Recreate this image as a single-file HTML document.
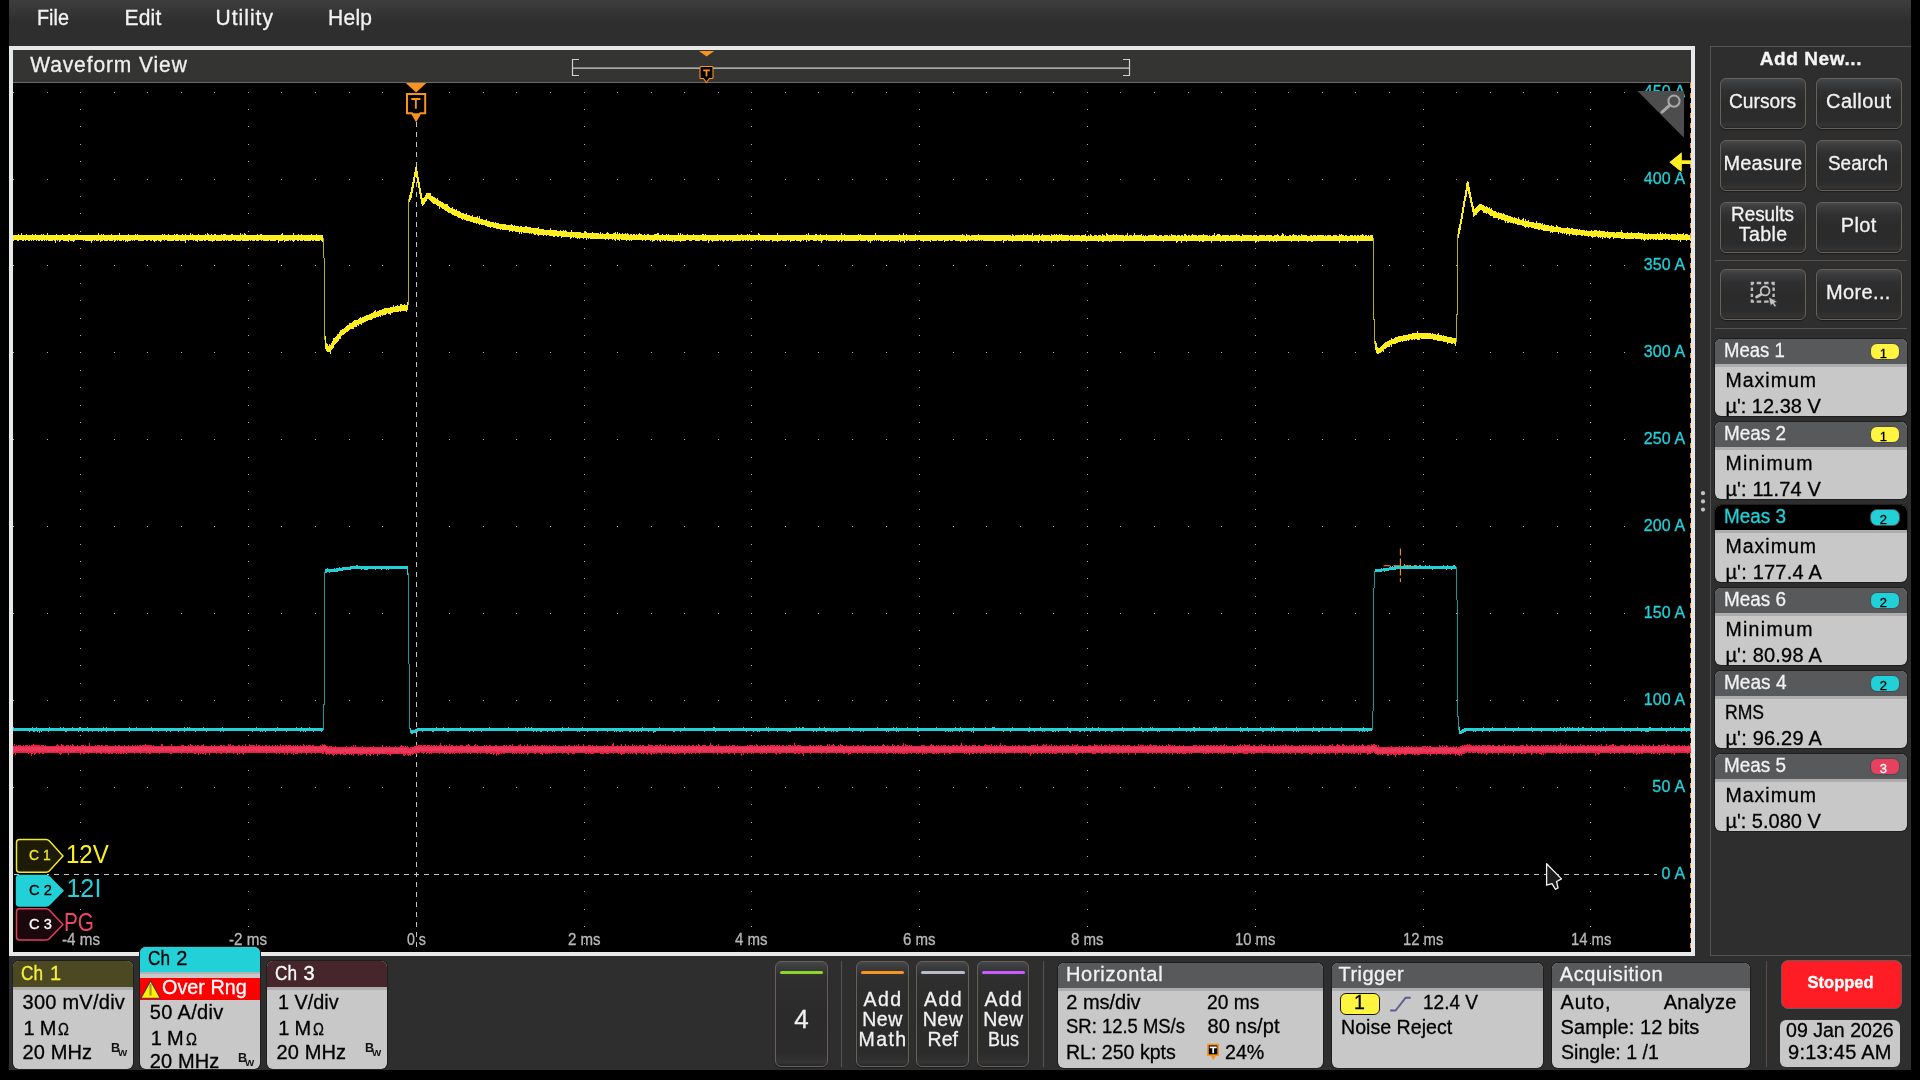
<!DOCTYPE html>
<html><head><meta charset="utf-8"><title>Oscilloscope</title>
<style>
html,body{margin:0;padding:0;background:#000;}
body{width:1920px;height:1080px;position:relative;overflow:hidden;font-family:"Liberation Sans",sans-serif;}
.t{position:absolute;line-height:1;white-space:pre;-webkit-text-stroke:0.3px;}
.a{position:absolute;box-sizing:border-box;}
.btn{position:absolute;box-sizing:border-box;border:1px solid #686059;border-radius:6px;box-shadow:0 1px 1px #1c1c1c;
 background:linear-gradient(#46484a 0%,#3c3d3e 8%,#303031 24%,#2b2b2c 50%,#2c2c2d 84%,#343435 95%,#262626 100%);}
.badge{position:absolute;box-sizing:border-box;border-radius:6px;background:#c8c8c8;overflow:hidden;box-shadow:0 0 0 1px #1e1e1e;}
.badge .h{position:absolute;left:0;top:0;right:0;}
svg{position:absolute;overflow:visible;}
</style></head><body><div id="root" style="position:absolute;left:0;top:0;width:1920px;height:1080px;will-change:transform">

<div class="a" style="left:9px;top:0;width:1902px;height:1070px;background:#2e2e2e"></div>
<div class="a" style="left:9px;top:0;width:1902px;height:46px;background:linear-gradient(#3e3e3e 0%,#383838 18%,#303030 42%,#2e2e2e 56%,#2e2e2e 100%)"></div>
<span class="t" style="left:36.70px;top:6px;line-height:23px;font-size:21px;color:#f2f2f2;transform:scale(0.9435,1.060);transform-origin:0 19px;">File</span>
<span class="t" style="left:124.40px;top:6px;line-height:23px;font-size:21px;color:#f2f2f2;letter-spacing:0.258px;transform:scale(1.0000,1.060);transform-origin:0 19px;">Edit</span>
<span class="t" style="left:215.60px;top:6px;line-height:23px;font-size:21px;color:#f2f2f2;letter-spacing:0.992px;transform:scale(1.0000,1.060);transform-origin:0 19px;">Utility</span>
<span class="t" style="left:328.00px;top:6px;line-height:23px;font-size:21px;color:#f2f2f2;letter-spacing:0.282px;transform:scale(1.0000,1.060);transform-origin:0 19px;">Help</span>
<div class="a" style="left:9px;top:46px;width:1686px;height:910px;background:#e7e8ea"></div>
<div class="a" style="left:13px;top:50px;width:1678px;height:33px;background:#343433;border-bottom:1px solid #6a6a6a"></div>
<span class="t" style="left:30.20px;top:53px;line-height:23px;font-size:21px;color:#f0f0f0;letter-spacing:0.896px;transform:scale(1.0000,1.040);transform-origin:0 19px;">Waveform View</span>
<div class="a" style="left:13px;top:83px;width:1678px;height:869px;background:#000;overflow:hidden"></div>
<svg style="left:0;top:0" width="1920" height="1080" viewBox="0 0 1920 1080">
<defs><clipPath id="pc"><rect x="13" y="83" width="1678" height="869"/></clipPath></defs>
<g clip-path="url(#pc)">
<path d="M13 787.5h1M47 787.5h1M80 787.5h1M114 787.5h1M147 787.5h1M181 787.5h1M214 787.5h1M248 787.5h1M281 787.5h1M315 787.5h1M349 787.5h1M382 787.5h1M449 787.5h1M483 787.5h1M516 787.5h1M550 787.5h1M584 787.5h1M617 787.5h1M651 787.5h1M684 787.5h1M718 787.5h1M751 787.5h1M785 787.5h1M818 787.5h1M852 787.5h1M886 787.5h1M919 787.5h1M953 787.5h1M986 787.5h1M1020 787.5h1M1053 787.5h1M1087 787.5h1M1120 787.5h1M1154 787.5h1M1188 787.5h1M1221 787.5h1M1255 787.5h1M1288 787.5h1M1322 787.5h1M1355 787.5h1M1389 787.5h1M1423 787.5h1M1456 787.5h1M1490 787.5h1M1523 787.5h1M1557 787.5h1M1590 787.5h1M1624 787.5h1M1657 787.5h1M13 700.5h1M47 700.5h1M80 700.5h1M114 700.5h1M147 700.5h1M181 700.5h1M214 700.5h1M248 700.5h1M281 700.5h1M315 700.5h1M349 700.5h1M382 700.5h1M449 700.5h1M483 700.5h1M516 700.5h1M550 700.5h1M584 700.5h1M617 700.5h1M651 700.5h1M684 700.5h1M718 700.5h1M751 700.5h1M785 700.5h1M818 700.5h1M852 700.5h1M886 700.5h1M919 700.5h1M953 700.5h1M986 700.5h1M1020 700.5h1M1053 700.5h1M1087 700.5h1M1120 700.5h1M1154 700.5h1M1188 700.5h1M1221 700.5h1M1255 700.5h1M1288 700.5h1M1322 700.5h1M1355 700.5h1M1389 700.5h1M1423 700.5h1M1456 700.5h1M1490 700.5h1M1523 700.5h1M1557 700.5h1M1590 700.5h1M1624 700.5h1M1657 700.5h1M13 613.5h1M47 613.5h1M80 613.5h1M114 613.5h1M147 613.5h1M181 613.5h1M214 613.5h1M248 613.5h1M281 613.5h1M315 613.5h1M349 613.5h1M382 613.5h1M449 613.5h1M483 613.5h1M516 613.5h1M550 613.5h1M584 613.5h1M617 613.5h1M651 613.5h1M684 613.5h1M718 613.5h1M751 613.5h1M785 613.5h1M818 613.5h1M852 613.5h1M886 613.5h1M919 613.5h1M953 613.5h1M986 613.5h1M1020 613.5h1M1053 613.5h1M1087 613.5h1M1120 613.5h1M1154 613.5h1M1188 613.5h1M1221 613.5h1M1255 613.5h1M1288 613.5h1M1322 613.5h1M1355 613.5h1M1389 613.5h1M1423 613.5h1M1456 613.5h1M1490 613.5h1M1523 613.5h1M1557 613.5h1M1590 613.5h1M1624 613.5h1M1657 613.5h1M13 526.5h1M47 526.5h1M80 526.5h1M114 526.5h1M147 526.5h1M181 526.5h1M214 526.5h1M248 526.5h1M281 526.5h1M315 526.5h1M349 526.5h1M382 526.5h1M449 526.5h1M483 526.5h1M516 526.5h1M550 526.5h1M584 526.5h1M617 526.5h1M651 526.5h1M684 526.5h1M718 526.5h1M751 526.5h1M785 526.5h1M818 526.5h1M852 526.5h1M886 526.5h1M919 526.5h1M953 526.5h1M986 526.5h1M1020 526.5h1M1053 526.5h1M1087 526.5h1M1120 526.5h1M1154 526.5h1M1188 526.5h1M1221 526.5h1M1255 526.5h1M1288 526.5h1M1322 526.5h1M1355 526.5h1M1389 526.5h1M1423 526.5h1M1456 526.5h1M1490 526.5h1M1523 526.5h1M1557 526.5h1M1590 526.5h1M1624 526.5h1M1657 526.5h1M13 439.5h1M47 439.5h1M80 439.5h1M114 439.5h1M147 439.5h1M181 439.5h1M214 439.5h1M248 439.5h1M281 439.5h1M315 439.5h1M349 439.5h1M382 439.5h1M449 439.5h1M483 439.5h1M516 439.5h1M550 439.5h1M584 439.5h1M617 439.5h1M651 439.5h1M684 439.5h1M718 439.5h1M751 439.5h1M785 439.5h1M818 439.5h1M852 439.5h1M886 439.5h1M919 439.5h1M953 439.5h1M986 439.5h1M1020 439.5h1M1053 439.5h1M1087 439.5h1M1120 439.5h1M1154 439.5h1M1188 439.5h1M1221 439.5h1M1255 439.5h1M1288 439.5h1M1322 439.5h1M1355 439.5h1M1389 439.5h1M1423 439.5h1M1456 439.5h1M1490 439.5h1M1523 439.5h1M1557 439.5h1M1590 439.5h1M1624 439.5h1M1657 439.5h1M13 352.5h1M47 352.5h1M80 352.5h1M114 352.5h1M147 352.5h1M181 352.5h1M214 352.5h1M248 352.5h1M281 352.5h1M315 352.5h1M349 352.5h1M382 352.5h1M449 352.5h1M483 352.5h1M516 352.5h1M550 352.5h1M584 352.5h1M617 352.5h1M651 352.5h1M684 352.5h1M718 352.5h1M751 352.5h1M785 352.5h1M818 352.5h1M852 352.5h1M886 352.5h1M919 352.5h1M953 352.5h1M986 352.5h1M1020 352.5h1M1053 352.5h1M1087 352.5h1M1120 352.5h1M1154 352.5h1M1188 352.5h1M1221 352.5h1M1255 352.5h1M1288 352.5h1M1322 352.5h1M1355 352.5h1M1389 352.5h1M1423 352.5h1M1456 352.5h1M1490 352.5h1M1523 352.5h1M1557 352.5h1M1590 352.5h1M1624 352.5h1M1657 352.5h1M13 265.5h1M47 265.5h1M80 265.5h1M114 265.5h1M147 265.5h1M181 265.5h1M214 265.5h1M248 265.5h1M281 265.5h1M315 265.5h1M349 265.5h1M382 265.5h1M449 265.5h1M483 265.5h1M516 265.5h1M550 265.5h1M584 265.5h1M617 265.5h1M651 265.5h1M684 265.5h1M718 265.5h1M751 265.5h1M785 265.5h1M818 265.5h1M852 265.5h1M886 265.5h1M919 265.5h1M953 265.5h1M986 265.5h1M1020 265.5h1M1053 265.5h1M1087 265.5h1M1120 265.5h1M1154 265.5h1M1188 265.5h1M1221 265.5h1M1255 265.5h1M1288 265.5h1M1322 265.5h1M1355 265.5h1M1389 265.5h1M1423 265.5h1M1456 265.5h1M1490 265.5h1M1523 265.5h1M1557 265.5h1M1590 265.5h1M1624 265.5h1M1657 265.5h1M13 179.5h1M47 179.5h1M80 179.5h1M114 179.5h1M147 179.5h1M181 179.5h1M214 179.5h1M248 179.5h1M281 179.5h1M315 179.5h1M349 179.5h1M382 179.5h1M449 179.5h1M483 179.5h1M516 179.5h1M550 179.5h1M584 179.5h1M617 179.5h1M651 179.5h1M684 179.5h1M718 179.5h1M751 179.5h1M785 179.5h1M818 179.5h1M852 179.5h1M886 179.5h1M919 179.5h1M953 179.5h1M986 179.5h1M1020 179.5h1M1053 179.5h1M1087 179.5h1M1120 179.5h1M1154 179.5h1M1188 179.5h1M1221 179.5h1M1255 179.5h1M1288 179.5h1M1322 179.5h1M1355 179.5h1M1389 179.5h1M1423 179.5h1M1456 179.5h1M1490 179.5h1M1523 179.5h1M1557 179.5h1M1590 179.5h1M1624 179.5h1M1657 179.5h1M13 92.5h1M47 92.5h1M80 92.5h1M114 92.5h1M147 92.5h1M181 92.5h1M214 92.5h1M248 92.5h1M281 92.5h1M315 92.5h1M349 92.5h1M382 92.5h1M449 92.5h1M483 92.5h1M516 92.5h1M550 92.5h1M584 92.5h1M617 92.5h1M651 92.5h1M684 92.5h1M718 92.5h1M751 92.5h1M785 92.5h1M818 92.5h1M852 92.5h1M886 92.5h1M919 92.5h1M953 92.5h1M986 92.5h1M1020 92.5h1M1053 92.5h1M1087 92.5h1M1120 92.5h1M1154 92.5h1M1188 92.5h1M1221 92.5h1M1255 92.5h1M1288 92.5h1M1322 92.5h1M1355 92.5h1M1389 92.5h1M1423 92.5h1M1456 92.5h1M1490 92.5h1M1523 92.5h1M1557 92.5h1M1590 92.5h1M1624 92.5h1M1657 92.5h1M80 943.5h1M80 926.5h1M80 909.5h1M80 891.5h1M80 856.5h1M80 839.5h1M80 822.5h1M80 804.5h1M80 770.5h1M80 752.5h1M80 735.5h1M80 717.5h1M80 683.5h1M80 665.5h1M80 648.5h1M80 630.5h1M80 596.5h1M80 578.5h1M80 561.5h1M80 544.5h1M80 509.5h1M80 491.5h1M80 474.5h1M80 457.5h1M80 422.5h1M80 405.5h1M80 387.5h1M80 370.5h1M80 335.5h1M80 318.5h1M80 300.5h1M80 283.5h1M80 248.5h1M80 231.5h1M80 213.5h1M80 196.5h1M80 161.5h1M80 144.5h1M80 126.5h1M80 109.5h1M248 943.5h1M248 926.5h1M248 909.5h1M248 891.5h1M248 856.5h1M248 839.5h1M248 822.5h1M248 804.5h1M248 770.5h1M248 752.5h1M248 735.5h1M248 717.5h1M248 683.5h1M248 665.5h1M248 648.5h1M248 630.5h1M248 596.5h1M248 578.5h1M248 561.5h1M248 544.5h1M248 509.5h1M248 491.5h1M248 474.5h1M248 457.5h1M248 422.5h1M248 405.5h1M248 387.5h1M248 370.5h1M248 335.5h1M248 318.5h1M248 300.5h1M248 283.5h1M248 248.5h1M248 231.5h1M248 213.5h1M248 196.5h1M248 161.5h1M248 144.5h1M248 126.5h1M248 109.5h1M584 943.5h1M584 926.5h1M584 909.5h1M584 891.5h1M584 856.5h1M584 839.5h1M584 822.5h1M584 804.5h1M584 770.5h1M584 752.5h1M584 735.5h1M584 717.5h1M584 683.5h1M584 665.5h1M584 648.5h1M584 630.5h1M584 596.5h1M584 578.5h1M584 561.5h1M584 544.5h1M584 509.5h1M584 491.5h1M584 474.5h1M584 457.5h1M584 422.5h1M584 405.5h1M584 387.5h1M584 370.5h1M584 335.5h1M584 318.5h1M584 300.5h1M584 283.5h1M584 248.5h1M584 231.5h1M584 213.5h1M584 196.5h1M584 161.5h1M584 144.5h1M584 126.5h1M584 109.5h1M751 943.5h1M751 926.5h1M751 909.5h1M751 891.5h1M751 856.5h1M751 839.5h1M751 822.5h1M751 804.5h1M751 770.5h1M751 752.5h1M751 735.5h1M751 717.5h1M751 683.5h1M751 665.5h1M751 648.5h1M751 630.5h1M751 596.5h1M751 578.5h1M751 561.5h1M751 544.5h1M751 509.5h1M751 491.5h1M751 474.5h1M751 457.5h1M751 422.5h1M751 405.5h1M751 387.5h1M751 370.5h1M751 335.5h1M751 318.5h1M751 300.5h1M751 283.5h1M751 248.5h1M751 231.5h1M751 213.5h1M751 196.5h1M751 161.5h1M751 144.5h1M751 126.5h1M751 109.5h1M919 943.5h1M919 926.5h1M919 909.5h1M919 891.5h1M919 856.5h1M919 839.5h1M919 822.5h1M919 804.5h1M919 770.5h1M919 752.5h1M919 735.5h1M919 717.5h1M919 683.5h1M919 665.5h1M919 648.5h1M919 630.5h1M919 596.5h1M919 578.5h1M919 561.5h1M919 544.5h1M919 509.5h1M919 491.5h1M919 474.5h1M919 457.5h1M919 422.5h1M919 405.5h1M919 387.5h1M919 370.5h1M919 335.5h1M919 318.5h1M919 300.5h1M919 283.5h1M919 248.5h1M919 231.5h1M919 213.5h1M919 196.5h1M919 161.5h1M919 144.5h1M919 126.5h1M919 109.5h1M1087 943.5h1M1087 926.5h1M1087 909.5h1M1087 891.5h1M1087 856.5h1M1087 839.5h1M1087 822.5h1M1087 804.5h1M1087 770.5h1M1087 752.5h1M1087 735.5h1M1087 717.5h1M1087 683.5h1M1087 665.5h1M1087 648.5h1M1087 630.5h1M1087 596.5h1M1087 578.5h1M1087 561.5h1M1087 544.5h1M1087 509.5h1M1087 491.5h1M1087 474.5h1M1087 457.5h1M1087 422.5h1M1087 405.5h1M1087 387.5h1M1087 370.5h1M1087 335.5h1M1087 318.5h1M1087 300.5h1M1087 283.5h1M1087 248.5h1M1087 231.5h1M1087 213.5h1M1087 196.5h1M1087 161.5h1M1087 144.5h1M1087 126.5h1M1087 109.5h1M1255 943.5h1M1255 926.5h1M1255 909.5h1M1255 891.5h1M1255 856.5h1M1255 839.5h1M1255 822.5h1M1255 804.5h1M1255 770.5h1M1255 752.5h1M1255 735.5h1M1255 717.5h1M1255 683.5h1M1255 665.5h1M1255 648.5h1M1255 630.5h1M1255 596.5h1M1255 578.5h1M1255 561.5h1M1255 544.5h1M1255 509.5h1M1255 491.5h1M1255 474.5h1M1255 457.5h1M1255 422.5h1M1255 405.5h1M1255 387.5h1M1255 370.5h1M1255 335.5h1M1255 318.5h1M1255 300.5h1M1255 283.5h1M1255 248.5h1M1255 231.5h1M1255 213.5h1M1255 196.5h1M1255 161.5h1M1255 144.5h1M1255 126.5h1M1255 109.5h1M1423 943.5h1M1423 926.5h1M1423 909.5h1M1423 891.5h1M1423 856.5h1M1423 839.5h1M1423 822.5h1M1423 804.5h1M1423 770.5h1M1423 752.5h1M1423 735.5h1M1423 717.5h1M1423 683.5h1M1423 665.5h1M1423 648.5h1M1423 630.5h1M1423 596.5h1M1423 578.5h1M1423 561.5h1M1423 544.5h1M1423 509.5h1M1423 491.5h1M1423 474.5h1M1423 457.5h1M1423 422.5h1M1423 405.5h1M1423 387.5h1M1423 370.5h1M1423 335.5h1M1423 318.5h1M1423 300.5h1M1423 283.5h1M1423 248.5h1M1423 231.5h1M1423 213.5h1M1423 196.5h1M1423 161.5h1M1423 144.5h1M1423 126.5h1M1423 109.5h1M1590 943.5h1M1590 926.5h1M1590 909.5h1M1590 891.5h1M1590 856.5h1M1590 839.5h1M1590 822.5h1M1590 804.5h1M1590 770.5h1M1590 752.5h1M1590 735.5h1M1590 717.5h1M1590 683.5h1M1590 665.5h1M1590 648.5h1M1590 630.5h1M1590 596.5h1M1590 578.5h1M1590 561.5h1M1590 544.5h1M1590 509.5h1M1590 491.5h1M1590 474.5h1M1590 457.5h1M1590 422.5h1M1590 405.5h1M1590 387.5h1M1590 370.5h1M1590 335.5h1M1590 318.5h1M1590 300.5h1M1590 283.5h1M1590 248.5h1M1590 231.5h1M1590 213.5h1M1590 196.5h1M1590 161.5h1M1590 144.5h1M1590 126.5h1M1590 109.5h1" stroke="#b4b4b4" stroke-width="1" fill="none" shape-rendering="crispEdges"/>
<line x1="14" y1="874.5" x2="1691" y2="874.5" stroke="#c4c4c4" stroke-width="1" stroke-dasharray="5 5" shape-rendering="crispEdges"/>
<line x1="416.5" y1="122" x2="416.5" y2="952" stroke="#c0c0c0" stroke-width="1" stroke-dasharray="5 5" shape-rendering="crispEdges"/>
<path d="M13 746h1V744h1V746h1V745h1V746h1V745h1h1h1V746h1h1V745h1V746h1V745h1h1h1V746h1V745h1V746h1V745h1h1V744h1V745h1h1h1h1h1h1V746h1V745h1h1h1V746h1V745h1V746h1h1h1h1h1h1h1h1h1h1V745h1V744h1V745h1V746h1h1V744h1V745h1h1V746h1h1V745h1h1h1V746h1V745h1V746h1V744h1V745h1V746h1h1h1V745h1V746h1h1h1V745h1h1h1V746h1V745h1V746h1h1h1V743h1V746h1h1h1h1h1V745h1V746h1V745h1h1h1V746h1V745h1h1V746h1h1V745h1h1h1V746h1h1h1h1h1h1h1V745h1V746h1h1V745h1h1V746h1h1h1h1V745h1V746h1h1h1V745h1V746h1h1h1V745h1V746h1h1V745h1V746h1V745h1V746h1V745h1h1V746h1V745h1h1h1V744h1V745h1h1h1h1h1h1V746h1V745h1V746h1h1h1h1h1h1h1V744h1h1V746h1h1h1h1h1h1h1h1V744h1V746h1h1h1h1h1h1h1h1h1V745h1h1h1V746h1h1h1h1V745h1V746h1V744h1V745h1h1V746h1h1V745h1V746h1V745h1h1V746h1h1V745h1h1V744h1V746h1h1h1h1h1h1h1V745h1V746h1h1V745h1V746h1h1h1h1h1V745h1h1V746h1V745h1h1V746h1h1h1V744h1V745h1V744h1V746h1V745h1h1V746h1h1h1h1V745h1h1V746h1h1V745h1V746h1h1V744h1V746h1h1h1V744h1V745h1h1h1h1h1V746h1V744h1V746h1V745h1h1V746h1h1V745h1V746h1h1V745h1h1V746h1h1V745h1V746h1h1V745h1V746h1h1V745h1V746h1V745h1V746h1h1V744h1V746h1V745h1h1V746h1V745h1h1V746h1V745h1h1h1V746h1h1V745h1V746h1V745h1V746h1V745h1V746h1h1V745h1V746h1h1V744h1V745h1V746h1V745h1V746h1V745h1h1h1V746h1V745h1h1V746h1h1h1h1h1h1V745h1V746h1V744h1V745h1V744h1V745h1V746h1h1V747h1V746h1h1h1V747h1h1h1V746h1V747h1h1h1h1h1h1h1h1h1h1V746h1V747h1h1h1h1V746h1V747h1V745h1V747h1V745h1V747h1h1h1h1h1h1V746h1V747h1h1h1h1h1h1h1h1h1h1V746h1V747h1h1h1h1h1h1h1h1V745h1V747h1h1h1V746h1V747h1h1V746h1V747h1h1h1h1h1V746h1V747h1h1h1h1V746h1V745h1V746h1h1V747h1V746h1V747h1V746h1V747h1V748h1V747h1h1h1h1V746h1h1V745h1V746h1V745h1h1h1h1V746h1V745h1h1h1V746h1V745h1h1h1V746h1V745h1V746h1V745h1h1V746h1V745h1V746h1h1V745h1V743h1V745h1V746h1h1V745h1V746h1V745h1V746h1h1V744h1V746h1V745h1h1V746h1h1h1V745h1V746h1h1h1V745h1h1h1V746h1h1h1V745h1h1V744h1V745h1V746h1h1h1h1V745h1V744h1V746h1V745h1V746h1h1h1h1h1h1V745h1V746h1V745h1V746h1h1V745h1h1V746h1h1h1h1V745h1h1V746h1h1h1h1h1h1V745h1h1V746h1V745h1V746h1h1V745h1h1V746h1V744h1V746h1h1h1h1h1V745h1h1V744h1V746h1h1h1V745h1V746h1h1V744h1V746h1h1h1h1V745h1V746h1V745h1h1V746h1V745h1V746h1h1h1V745h1h1V746h1V745h1V746h1V745h1V746h1h1V745h1V746h1h1h1V745h1V746h1V745h1V746h1h1h1h1h1h1h1h1h1V745h1V746h1h1V745h1h1V746h1h1h1h1V745h1V746h1V745h1V746h1V744h1V746h1h1h1h1V744h1V746h1h1h1h1V745h1h1h1V746h1V745h1V746h1h1h1V745h1V746h1h1h1h1h1h1h1V745h1V746h1h1V745h1V746h1h1h1h1V744h1V743h1V746h1h1h1V745h1V746h1h1h1V744h1V746h1h1h1V744h1V746h1h1V745h1V746h1h1h1V744h1V746h1V745h1V746h1V745h1V746h1h1V745h1h1V746h1V745h1h1V746h1h1h1h1V744h1V745h1h1h1h1V746h1h1V745h1h1h1V746h1V745h1V744h1V746h1V745h1h1V746h1V744h1V746h1h1V745h1V746h1h1V745h1V746h1V745h1h1V746h1h1V745h1V746h1V745h1V746h1V745h1h1V746h1h1V745h1V746h1h1V745h1h1V746h1h1V745h1h1V746h1h1V745h1V746h1V744h1V745h1V746h1h1V745h1h1h1h1V746h1h1h1V745h1V743h1V745h1h1V746h1h1h1V745h1V746h1V744h1V746h1h1h1h1h1h1h1V745h1V746h1h1V745h1V746h1h1V745h1h1h1V746h1h1V745h1V746h1h1h1h1h1h1h1h1h1V745h1V746h1V745h1h1h1h1V746h1V745h1V746h1V744h1V745h1V746h1h1h1V745h1V746h1V745h1h1V746h1h1V745h1h1V746h1V745h1h1h1h1h1V746h1V745h1h1V746h1V745h1V746h1h1V745h1h1V746h1h1V745h1V746h1V745h1h1h1V746h1V745h1V746h1V743h1V745h1V746h1V745h1h1h1h1V746h1h1h1h1h1h1h1h1V745h1h1V746h1h1V745h1V746h1h1V745h1V746h1V745h1V746h1V745h1h1V746h1h1h1h1h1V744h1V746h1V744h1V746h1V745h1h1V744h1V745h1V746h1h1h1V745h1V746h1V744h1V745h1h1V746h1h1h1V745h1V746h1h1h1h1h1h1V745h1V746h1h1h1V745h1h1V746h1h1h1V745h1h1V746h1V745h1V746h1h1h1h1V745h1V746h1h1h1V745h1V746h1h1V745h1V746h1h1h1h1V745h1V744h1V745h1V746h1h1V745h1V746h1h1h1h1V744h1V746h1V745h1V746h1h1V745h1h1V746h1h1h1V745h1V743h1V746h1V744h1V745h1h1V746h1V745h1V746h1V745h1V746h1h1h1h1h1h1h1h1h1V745h1h1h1h1V746h1h1h1h1h1V745h1V744h1V745h1h1V746h1h1V745h1V746h1V745h1V746h1h1V745h1V746h1V745h1h1h1V746h1h1V745h1V746h1h1h1V745h1h1h1V746h1V745h1h1V746h1h1V745h1V743h1V745h1V746h1h1V745h1h1V746h1h1V745h1V746h1h1V745h1h1h1h1V746h1h1V745h1h1V746h1h1h1h1V745h1V744h1V745h1h1h1h1V746h1V744h1V746h1h1V745h1V746h1V745h1V746h1h1V745h1V743h1V746h1V745h1V746h1V745h1h1V746h1h1h1h1h1h1V745h1V746h1h1V745h1V746h1h1V745h1h1V746h1h1h1V745h1V746h1V745h1V746h1h1h1h1h1V745h1h1h1h1h1V746h1V744h1V746h1h1h1h1V745h1V744h1V745h1h1V744h1V746h1h1V745h1V746h1V744h1V746h1h1V745h1V746h1V745h1V746h1h1h1V745h1V746h1V745h1V746h1V745h1V746h1V745h1h1h1V746h1h1h1V744h1V746h1V745h1h1h1V744h1V746h1h1h1h1V745h1V746h1h1h1h1h1V745h1h1h1V746h1h1h1V744h1V745h1h1h1V746h1V745h1V746h1V744h1V746h1h1V745h1h1h1V746h1h1V744h1V746h1V745h1h1h1h1V746h1V745h1h1h1h1V746h1h1V745h1h1V746h1V745h1V746h1V745h1h1h1V746h1h1h1h1V745h1V746h1h1h1V744h1V746h1V745h1h1h1h1V746h1V745h1V746h1V745h1V746h1V745h1V744h1V745h1V746h1V745h1h1h1h1V746h1h1V745h1V746h1h1V745h1V746h1h1h1V745h1V746h1V744h1V745h1h1V746h1V745h1V746h1V745h1V746h1h1h1h1V745h1V746h1h1h1V745h1V746h1h1h1h1h1h1h1h1h1V745h1h1h1h1V746h1h1V745h1V746h1V745h1V746h1V745h1V746h1h1V745h1h1h1V746h1V745h1h1V746h1V745h1h1V746h1V745h1h1V746h1h1V745h1h1V746h1V745h1V744h1V746h1V745h1V746h1h1h1h1h1V745h1V746h1h1h1h1V745h1V746h1V745h1V744h1V746h1V745h1V746h1V744h1V745h1h1h1h1V744h1V746h1h1h1V745h1h1V746h1h1h1h1V745h1V746h1V744h1V746h1V745h1h1h1V746h1h1h1V744h1V746h1h1h1V744h1V746h1h1h1V745h1V746h1h1V745h1V746h1V745h1h1V746h1V744h1V745h1V746h1V745h1V746h1h1V745h1h1V746h1h1h1h1h1h1V745h1V746h1h1V745h1h1V746h1V745h1h1V746h1V745h1V746h1V745h1V746h1h1V745h1V746h1V745h1V746h1V745h1V746h1h1V744h1V746h1h1V745h1V746h1h1h1h1h1V745h1h1V746h1V744h1V746h1h1h1V745h1V744h1V745h1h1V746h1h1V744h1h1V745h1V746h1V745h1V746h1h1V745h1V746h1V745h1h1V744h1V746h1h1V745h1V746h1h1V745h1V746h1V745h1V744h1V745h1V746h1h1h1V745h1h1h1V746h1V744h1V745h1V744h1h1V745h1h1V747h1V745h1V747h1h1h1h1h1h1h1h1h1h1h1h1V746h1V747h1h1h1h1h1h1h1V746h1V747h1h1V746h1V747h1h1h1V746h1V747h1V746h1V747h1h1V746h1V747h1h1h1h1V746h1V747h1h1h1h1h1V746h1h1h1h1V747h1V746h1V747h1V746h1h1V747h1h1h1h1h1h1h1h1V745h1V746h1V747h1V745h1V747h1V746h1V747h1V745h1V746h1V747h1h1h1h1h1V746h1V747h1h1V746h1V748h1V747h1h1V746h1h1V745h1V746h1V745h1h1h1V744h1V745h1V744h1V745h1h1V746h1V745h1V746h1V745h1h1V746h1V745h1h1V746h1h1V745h1h1h1h1V746h1V745h1h1h1h1V746h1V745h1h1V746h1h1h1h1V745h1h1V746h1h1V745h1V746h1V744h1V746h1h1h1V745h1V746h1V745h1V746h1h1V745h1h1V746h1h1h1h1h1V745h1h1h1h1V746h1h1V744h1V745h1V746h1h1h1V745h1h1V746h1V745h1V746h1h1V745h1h1V746h1h1V745h1V746h1V745h1V746h1V745h1h1h1h1V746h1V745h1h1V746h1V745h1h1h1V746h1h1V745h1h1V743h1V746h1V745h1h1V746h1V745h1V744h1V746h1V745h1V746h1V745h1V746h1h1h1V745h1V746h1h1V745h1V746h1h1V744h1V746h1V745h1h1h1V746h1h1V745h1h1V746h1V745h1h1V746h1V745h1V746h1V745h1V746h1h1V745h1h1V746h1V744h1V746h1h1h1h1V744h1V746h1h1V745h1h1h1V744h1h1V746h1V745h1V746h1h1h1h1V745h1h1h1h1V746h1V745h1V746h1h1V745h1V744h1V746h1V745h1V746h1V745h1h1V746h1V745h1h1V746h1V745h1V746h1h1V744h1V745h1V746h1V745h1V746h1h1h1V745h1V746h1h1h1V744h1V746h1h1h1h1V745h1h1V746h1V745h1h1h1V744h1V746h1h1V744h1V745h1h1V746h1h1h1V745h1h1V746h1h1h1V745h1h1V746h1h1V745h1V746h1V745h1V746h1h1h1V745h1V746h1h1h1V753h-1V754h-1V753h-1V753h-1V754h-1V753h-1V753h-1V753h-1V753h-1V753h-1V753h-1V753h-1V753h-1V753h-1V753h-1V753h-1V753h-1V755h-1V754h-1V753h-1V754h-1V753h-1V753h-1V753h-1V753h-1V753h-1V753h-1V753h-1V754h-1V753h-1V753h-1V753h-1V755h-1V753h-1V754h-1V753h-1V753h-1V754h-1V754h-1V753h-1V754h-1V753h-1V753h-1V753h-1V753h-1V753h-1V753h-1V753h-1V753h-1V754h-1V754h-1V753h-1V754h-1V753h-1V754h-1V755h-1V753h-1V753h-1V754h-1V753h-1V753h-1V753h-1V753h-1V753h-1V753h-1V753h-1V753h-1V754h-1V753h-1V753h-1V753h-1V753h-1V754h-1V753h-1V753h-1V753h-1V753h-1V754h-1V753h-1V753h-1V753h-1V754h-1V753h-1V753h-1V753h-1V753h-1V753h-1V753h-1V753h-1V753h-1V753h-1V753h-1V754h-1V755h-1V754h-1V753h-1V756h-1V753h-1V753h-1V753h-1V753h-1V753h-1V753h-1V753h-1V753h-1V754h-1V753h-1V753h-1V753h-1V753h-1V753h-1V753h-1V753h-1V753h-1V754h-1V753h-1V753h-1V753h-1V753h-1V753h-1V754h-1V753h-1V753h-1V753h-1V754h-1V753h-1V753h-1V753h-1V753h-1V754h-1V753h-1V754h-1V754h-1V753h-1V753h-1V754h-1V753h-1V753h-1V753h-1V753h-1V753h-1V753h-1V753h-1V753h-1V753h-1V753h-1V754h-1V753h-1V755h-1V753h-1V755h-1V754h-1V754h-1V753h-1V753h-1V754h-1V753h-1V753h-1V753h-1V754h-1V755h-1V753h-1V753h-1V753h-1V753h-1V753h-1V754h-1V754h-1V753h-1V754h-1V754h-1V753h-1V753h-1V754h-1V753h-1V753h-1V753h-1V754h-1V756h-1V753h-1V753h-1V753h-1V754h-1V753h-1V753h-1V753h-1V753h-1V754h-1V753h-1V753h-1V753h-1V753h-1V753h-1V755h-1V753h-1V753h-1V753h-1V753h-1V753h-1V754h-1V753h-1V753h-1V753h-1V753h-1V754h-1V755h-1V753h-1V754h-1V753h-1V753h-1V754h-1V753h-1V753h-1V754h-1V753h-1V752h-1V753h-1V753h-1V753h-1V753h-1V752h-1V753h-1V753h-1V753h-1V752h-1V753h-1V753h-1V754h-1V754h-1V754h-1V756h-1V754h-1V756h-1V755h-1V755h-1V754h-1V756h-1V754h-1V754h-1V754h-1V754h-1V755h-1V754h-1V754h-1V754h-1V755h-1V754h-1V755h-1V754h-1V755h-1V754h-1V754h-1V754h-1V754h-1V754h-1V755h-1V754h-1V754h-1V754h-1V754h-1V754h-1V756h-1V754h-1V754h-1V755h-1V754h-1V754h-1V754h-1V754h-1V754h-1V754h-1V754h-1V755h-1V755h-1V755h-1V754h-1V755h-1V755h-1V754h-1V755h-1V754h-1V754h-1V754h-1V754h-1V754h-1V755h-1V755h-1V755h-1V754h-1V754h-1V754h-1V755h-1V755h-1V755h-1V754h-1V755h-1V757h-1V755h-1V755h-1V754h-1V755h-1V755h-1V754h-1V756h-1V756h-1V754h-1V754h-1V754h-1V754h-1V755h-1V754h-1V755h-1V754h-1V755h-1V755h-1V754h-1V754h-1V753h-1V752h-1V753h-1V753h-1V754h-1V754h-1V754h-1V755h-1V753h-1V753h-1V753h-1V753h-1V753h-1V753h-1V755h-1V753h-1V755h-1V753h-1V753h-1V753h-1V754h-1V754h-1V753h-1V754h-1V753h-1V753h-1V754h-1V753h-1V753h-1V753h-1V753h-1V753h-1V755h-1V753h-1V753h-1V753h-1V753h-1V754h-1V753h-1V755h-1V753h-1V753h-1V753h-1V753h-1V753h-1V754h-1V753h-1V753h-1V753h-1V754h-1V754h-1V753h-1V753h-1V754h-1V753h-1V754h-1V753h-1V754h-1V753h-1V753h-1V753h-1V753h-1V754h-1V755h-1V754h-1V754h-1V753h-1V753h-1V753h-1V753h-1V753h-1V753h-1V754h-1V754h-1V753h-1V753h-1V753h-1V753h-1V753h-1V755h-1V753h-1V753h-1V753h-1V753h-1V754h-1V753h-1V754h-1V753h-1V753h-1V753h-1V753h-1V754h-1V753h-1V753h-1V753h-1V754h-1V753h-1V754h-1V753h-1V753h-1V754h-1V753h-1V754h-1V753h-1V753h-1V753h-1V753h-1V753h-1V753h-1V753h-1V753h-1V753h-1V754h-1V753h-1V753h-1V753h-1V753h-1V753h-1V753h-1V753h-1V754h-1V754h-1V753h-1V754h-1V753h-1V753h-1V753h-1V754h-1V754h-1V754h-1V754h-1V754h-1V753h-1V753h-1V753h-1V753h-1V753h-1V754h-1V753h-1V754h-1V753h-1V755h-1V753h-1V753h-1V753h-1V753h-1V753h-1V753h-1V753h-1V753h-1V754h-1V754h-1V753h-1V754h-1V753h-1V753h-1V754h-1V753h-1V753h-1V753h-1V753h-1V753h-1V754h-1V753h-1V753h-1V753h-1V754h-1V753h-1V754h-1V754h-1V753h-1V754h-1V753h-1V753h-1V753h-1V753h-1V753h-1V753h-1V753h-1V753h-1V753h-1V753h-1V753h-1V754h-1V753h-1V754h-1V753h-1V753h-1V753h-1V754h-1V754h-1V754h-1V754h-1V753h-1V753h-1V754h-1V753h-1V754h-1V753h-1V753h-1V753h-1V753h-1V755h-1V753h-1V753h-1V754h-1V753h-1V753h-1V754h-1V753h-1V753h-1V753h-1V753h-1V754h-1V753h-1V753h-1V753h-1V753h-1V754h-1V753h-1V753h-1V753h-1V754h-1V753h-1V753h-1V753h-1V754h-1V754h-1V753h-1V753h-1V753h-1V753h-1V753h-1V753h-1V753h-1V753h-1V753h-1V753h-1V753h-1V755h-1V753h-1V753h-1V753h-1V753h-1V753h-1V753h-1V755h-1V753h-1V753h-1V753h-1V753h-1V753h-1V754h-1V753h-1V753h-1V753h-1V754h-1V754h-1V753h-1V753h-1V753h-1V753h-1V753h-1V753h-1V754h-1V754h-1V753h-1V753h-1V753h-1V753h-1V753h-1V753h-1V754h-1V754h-1V753h-1V753h-1V753h-1V753h-1V753h-1V754h-1V754h-1V754h-1V754h-1V753h-1V753h-1V753h-1V753h-1V753h-1V753h-1V753h-1V753h-1V753h-1V754h-1V753h-1V753h-1V753h-1V753h-1V754h-1V755h-1V754h-1V753h-1V753h-1V753h-1V753h-1V753h-1V753h-1V754h-1V753h-1V754h-1V753h-1V753h-1V753h-1V755h-1V753h-1V753h-1V753h-1V753h-1V753h-1V754h-1V754h-1V754h-1V753h-1V754h-1V753h-1V753h-1V754h-1V753h-1V753h-1V753h-1V754h-1V753h-1V753h-1V753h-1V754h-1V753h-1V753h-1V753h-1V754h-1V753h-1V753h-1V753h-1V754h-1V753h-1V754h-1V756h-1V753h-1V754h-1V753h-1V753h-1V753h-1V753h-1V753h-1V753h-1V754h-1V753h-1V753h-1V753h-1V753h-1V753h-1V753h-1V754h-1V753h-1V753h-1V753h-1V753h-1V753h-1V753h-1V753h-1V753h-1V754h-1V753h-1V753h-1V754h-1V753h-1V753h-1V753h-1V753h-1V753h-1V753h-1V753h-1V754h-1V753h-1V753h-1V753h-1V754h-1V753h-1V753h-1V753h-1V753h-1V754h-1V753h-1V754h-1V753h-1V753h-1V754h-1V753h-1V753h-1V753h-1V754h-1V753h-1V753h-1V754h-1V754h-1V753h-1V753h-1V755h-1V753h-1V753h-1V754h-1V753h-1V754h-1V753h-1V753h-1V753h-1V753h-1V753h-1V753h-1V753h-1V753h-1V753h-1V753h-1V753h-1V753h-1V753h-1V754h-1V754h-1V753h-1V753h-1V753h-1V753h-1V755h-1V753h-1V753h-1V753h-1V753h-1V753h-1V754h-1V753h-1V754h-1V753h-1V754h-1V754h-1V754h-1V753h-1V753h-1V753h-1V753h-1V753h-1V754h-1V753h-1V754h-1V753h-1V755h-1V753h-1V753h-1V753h-1V754h-1V753h-1V754h-1V753h-1V753h-1V753h-1V753h-1V754h-1V753h-1V753h-1V753h-1V754h-1V754h-1V753h-1V754h-1V754h-1V754h-1V753h-1V754h-1V753h-1V754h-1V753h-1V753h-1V754h-1V753h-1V754h-1V753h-1V753h-1V753h-1V753h-1V753h-1V754h-1V754h-1V753h-1V753h-1V753h-1V754h-1V753h-1V753h-1V753h-1V753h-1V753h-1V754h-1V753h-1V754h-1V753h-1V753h-1V753h-1V753h-1V753h-1V753h-1V754h-1V753h-1V753h-1V753h-1V753h-1V754h-1V753h-1V753h-1V753h-1V753h-1V754h-1V753h-1V753h-1V753h-1V753h-1V753h-1V753h-1V754h-1V754h-1V755h-1V753h-1V753h-1V753h-1V754h-1V754h-1V753h-1V753h-1V753h-1V753h-1V753h-1V753h-1V754h-1V753h-1V753h-1V753h-1V753h-1V753h-1V753h-1V753h-1V753h-1V753h-1V754h-1V753h-1V753h-1V753h-1V753h-1V754h-1V753h-1V753h-1V753h-1V753h-1V753h-1V753h-1V753h-1V753h-1V753h-1V753h-1V754h-1V753h-1V753h-1V753h-1V753h-1V753h-1V753h-1V756h-1V754h-1V753h-1V753h-1V754h-1V754h-1V753h-1V753h-1V754h-1V754h-1V753h-1V753h-1V753h-1V753h-1V753h-1V753h-1V753h-1V754h-1V753h-1V753h-1V753h-1V753h-1V753h-1V754h-1V754h-1V753h-1V753h-1V755h-1V754h-1V753h-1V753h-1V753h-1V753h-1V753h-1V753h-1V753h-1V753h-1V754h-1V753h-1V753h-1V753h-1V754h-1V753h-1V754h-1V753h-1V753h-1V753h-1V753h-1V753h-1V753h-1V754h-1V753h-1V754h-1V753h-1V753h-1V753h-1V754h-1V753h-1V753h-1V753h-1V755h-1V753h-1V756h-1V753h-1V753h-1V753h-1V753h-1V753h-1V753h-1V755h-1V753h-1V753h-1V753h-1V753h-1V754h-1V754h-1V753h-1V753h-1V753h-1V753h-1V753h-1V754h-1V754h-1V753h-1V753h-1V753h-1V755h-1V753h-1V753h-1V753h-1V754h-1V753h-1V753h-1V753h-1V753h-1V753h-1V753h-1V753h-1V753h-1V753h-1V753h-1V753h-1V753h-1V753h-1V754h-1V753h-1V753h-1V753h-1V754h-1V753h-1V753h-1V753h-1V754h-1V753h-1V754h-1V753h-1V753h-1V753h-1V754h-1V755h-1V753h-1V753h-1V753h-1V753h-1V753h-1V754h-1V753h-1V754h-1V754h-1V754h-1V753h-1V754h-1V753h-1V753h-1V754h-1V753h-1V753h-1V753h-1V753h-1V753h-1V753h-1V753h-1V755h-1V753h-1V753h-1V753h-1V753h-1V754h-1V753h-1V754h-1V754h-1V753h-1V755h-1V754h-1V753h-1V753h-1V755h-1V754h-1V753h-1V753h-1V754h-1V753h-1V754h-1V753h-1V753h-1V753h-1V753h-1V755h-1V754h-1V753h-1V753h-1V754h-1V753h-1V754h-1V753h-1V754h-1V753h-1V753h-1V753h-1V754h-1V754h-1V754h-1V755h-1V754h-1V753h-1V754h-1V753h-1V753h-1V753h-1V753h-1V754h-1V753h-1V753h-1V753h-1V753h-1V754h-1V754h-1V754h-1V753h-1V753h-1V754h-1V754h-1V754h-1V754h-1V753h-1V753h-1V753h-1V753h-1V753h-1V753h-1V754h-1V754h-1V754h-1V754h-1V753h-1V754h-1V753h-1V754h-1V754h-1V753h-1V753h-1V753h-1V753h-1V753h-1V753h-1V753h-1V753h-1V753h-1V753h-1V754h-1V754h-1V754h-1V753h-1V753h-1V753h-1V755h-1V754h-1V753h-1V753h-1V753h-1V753h-1V754h-1V753h-1V753h-1V753h-1V753h-1V753h-1V754h-1V753h-1V753h-1V753h-1V753h-1V754h-1V753h-1V754h-1V753h-1V754h-1V754h-1V754h-1V753h-1V753h-1V755h-1V754h-1V754h-1V753h-1V753h-1V753h-1V753h-1V754h-1V754h-1V753h-1V753h-1V753h-1V753h-1V753h-1V754h-1V755h-1V753h-1V753h-1V753h-1V754h-1V753h-1V754h-1V753h-1V754h-1V753h-1V753h-1V754h-1V753h-1V754h-1V753h-1V754h-1V753h-1V753h-1V753h-1V753h-1V753h-1V753h-1V753h-1V754h-1V754h-1V753h-1V754h-1V753h-1V754h-1V755h-1V754h-1V756h-1V753h-1V754h-1V755h-1V753h-1V754h-1V754h-1V753h-1V753h-1V754h-1V754h-1V753h-1V753h-1V753h-1V753h-1V753h-1V754h-1V753h-1V753h-1V754h-1V753h-1V753h-1V753h-1V753h-1V753h-1V753h-1V754h-1V753h-1V753h-1V754h-1V753h-1V753h-1V753h-1V753h-1V753h-1V754h-1V753h-1V754h-1V753h-1V753h-1V753h-1V753h-1V754h-1V753h-1V754h-1V753h-1V754h-1V754h-1V753h-1V753h-1V754h-1V753h-1V754h-1V753h-1V753h-1V753h-1V753h-1V754h-1V753h-1V753h-1V753h-1V753h-1V753h-1V753h-1V753h-1V754h-1V753h-1V754h-1V753h-1V753h-1V754h-1V752h-1V753h-1V754h-1V753h-1V753h-1V752h-1V753h-1V753h-1V753h-1V754h-1V754h-1V753h-1V754h-1V755h-1V754h-1V756h-1V755h-1V756h-1V755h-1V754h-1V755h-1V756h-1V756h-1V754h-1V754h-1V754h-1V754h-1V754h-1V754h-1V754h-1V754h-1V754h-1V754h-1V754h-1V754h-1V756h-1V755h-1V754h-1V755h-1V754h-1V754h-1V754h-1V754h-1V754h-1V754h-1V754h-1V755h-1V754h-1V756h-1V754h-1V754h-1V754h-1V755h-1V754h-1V754h-1V756h-1V755h-1V754h-1V754h-1V756h-1V754h-1V754h-1V754h-1V755h-1V755h-1V755h-1V754h-1V756h-1V754h-1V754h-1V754h-1V754h-1V756h-1V754h-1V755h-1V754h-1V755h-1V754h-1V754h-1V754h-1V755h-1V755h-1V755h-1V754h-1V754h-1V755h-1V754h-1V754h-1V754h-1V755h-1V754h-1V755h-1V756h-1V755h-1V754h-1V754h-1V755h-1V754h-1V754h-1V755h-1V754h-1V752h-1V754h-1V754h-1V753h-1V753h-1V753h-1V753h-1V753h-1V753h-1V754h-1V753h-1V753h-1V753h-1V754h-1V753h-1V753h-1V753h-1V753h-1V755h-1V753h-1V753h-1V753h-1V753h-1V754h-1V753h-1V753h-1V753h-1V754h-1V754h-1V754h-1V753h-1V755h-1V753h-1V754h-1V753h-1V753h-1V753h-1V755h-1V753h-1V753h-1V755h-1V753h-1V753h-1V753h-1V753h-1V754h-1V753h-1V753h-1V754h-1V753h-1V753h-1V753h-1V753h-1V753h-1V753h-1V753h-1V753h-1V753h-1V754h-1V753h-1V753h-1V753h-1V753h-1V753h-1V753h-1V753h-1V753h-1V753h-1V753h-1V753h-1V753h-1V753h-1V753h-1V753h-1V753h-1V753h-1V753h-1V753h-1V753h-1V753h-1V753h-1V755h-1V754h-1V753h-1V753h-1V754h-1V753h-1V755h-1V753h-1V753h-1V753h-1V754h-1V753h-1V753h-1V753h-1V753h-1V753h-1V753h-1V754h-1V753h-1V753h-1V753h-1V753h-1V754h-1V754h-1V753h-1V753h-1V753h-1V754h-1V753h-1V753h-1V753h-1V753h-1V753h-1V753h-1V755h-1V753h-1V753h-1V753h-1V755h-1V753h-1V754h-1V754h-1V753h-1V754h-1V753h-1V755h-1V753h-1V753h-1V754h-1V754h-1V753h-1V753h-1V753h-1V753h-1V753h-1V753h-1V754h-1V753h-1V753h-1V753h-1V753h-1V753h-1V754h-1V753h-1V753h-1V753h-1V753h-1V753h-1V753h-1V753h-1V753h-1V753h-1V754h-1V754h-1V753h-1V753h-1V753h-1V753h-1V753h-1V753h-1V753h-1V753h-1V753h-1V753h-1V754h-1V753h-1V753h-1V753h-1V753h-1V753h-1V753h-1V753h-1V753h-1V754h-1V754h-1V753h-1V753h-1V754h-1V753h-1V753h-1V753h-1V753h-1V753h-1V754h-1V753h-1V753h-1V753h-1V753h-1V753h-1V754h-1V753h-1V753h-1V753h-1V753h-1V753h-1V753h-1V753h-1V754h-1V753h-1V753h-1V754h-1V753h-1V754h-1V754h-1V753h-1V754h-1V753h-1V754h-1V753h-1V753h-1V753h-1V754h-1V754h-1V753h-1V754h-1V754h-1V753h-1V753h-1V754h-1V753h-1V753h-1V753h-1V754h-1V754h-1V753h-1V753h-1V753h-1V754h-1V753h-1V753h-1V753h-1V753h-1V753h-1V753h-1V753h-1V754h-1V753h-1V753h-1V753h-1V754h-1V754h-1V753h-1V753h-1V755h-1V753h-1V753h-1V753h-1V753h-1V753h-1V753h-1V753h-1V753h-1V753h-1V753h-1V753h-1V755h-1V753h-1V753h-1V753h-1V753h-1V753h-1V753h-1V754h-1V755h-1V754h-1V753h-1V753h-1V753h-1V753h-1V753h-1V753h-1V753h-1V753h-1V753h-1V753h-1V753h-1V753h-1V753h-1V753h-1V753h-1V754h-1V754h-1V753h-1V753h-1V754h-1V753h-1V753h-1V753h-1V754h-1V755h-1V753h-1V754h-1V756h-1V753h-1V753h-1V754h-1V753h-1V753h-1V753h-1V753h-1V753h-1V753h-1V753h-1V753h-1V753h-1V753h-1V753h-1V753h-1V755h-1V753h-1V754h-1Z" fill="#ee1c40"/>
<path d="M13 747h1h1h1h1h1h1h1h1h1h1h1h1h1h1h1h1h1h1h1h1h1h1h1h1h1h1h1h1h1h1h1h1h1h1h1h1h1h1h1h1h1h1h1h1h1h1h1h1h1h1h1h1h1h1h1h1h1h1h1h1h1h1h1h1h1h1h1h1h1h1h1h1h1h1h1h1h1h1h1h1h1h1h1h1h1h1h1h1h1h1h1h1h1h1h1h1h1h1h1h1h1h1h1h1h1h1h1h1h1h1h1h1h1h1h1h1h1h1h1h1h1h1h1h1h1h1h1h1h1h1h1h1h1h1h1h1h1h1h1h1h1h1h1h1h1h1h1h1h1h1h1h1h1h1h1h1h1h1h1h1h1h1h1h1h1h1h1h1h1h1h1h1V746h1V747h1h1h1h1h1h1h1h1h1h1h1h1h1h1h1h1h1h1h1h1h1h1h1h1h1h1h1h1h1h1h1h1h1h1h1h1h1h1h1h1h1h1h1h1h1h1h1h1h1h1h1h1h1h1h1h1h1h1h1h1h1h1h1h1h1h1h1h1h1h1h1h1h1h1h1h1h1h1h1h1h1h1h1h1h1h1h1h1h1h1h1h1h1h1h1h1h1h1h1h1h1h1h1h1h1h1h1h1h1h1h1h1h1h1h1h1h1h1h1h1h1h1h1h1h1h1h1h1h1h1h1h1h1h1h1h1h1V746h1h1h1V747h1V748h1h1V749h1h1V748h1V749h1h1V748h1h1V749h1h1V748h1h1V749h1h1V748h1h1V749h1V748h1V749h1h1h1V748h1h1h1h1h1h1h1V749h1V748h1h1V749h1V748h1V749h1h1V748h1h1V749h1h1V748h1h1V749h1V748h1h1h1h1h1V749h1V748h1h1h1h1V749h1V748h1h1V749h1V748h1h1h1h1h1h1h1h1h1h1h1h1h1h1h1h1h1h1h1h1h1h1h1V749h1h1h1h1h1V748h1h1h1V747h1h1h1h1h1h1h1h1h1h1h1h1h1h1h1h1h1h1h1h1h1h1h1h1h1h1h1h1h1h1h1h1h1h1h1h1h1h1h1h1h1h1h1h1h1h1h1h1h1h1h1h1h1h1h1h1h1h1h1h1h1h1h1h1h1h1h1h1h1h1h1h1h1h1h1h1h1h1h1h1h1h1h1h1h1h1h1h1h1h1h1h1h1h1h1h1h1h1h1h1h1h1h1h1h1h1h1h1h1h1h1h1h1h1h1h1h1h1h1h1h1h1h1h1h1h1h1h1h1h1h1h1h1h1h1h1h1h1h1h1h1h1h1h1h1h1h1h1h1h1h1h1h1h1h1h1h1h1h1h1h1h1h1h1h1h1h1h1h1h1h1h1h1h1h1h1h1h1h1h1h1h1h1h1h1h1h1h1h1h1h1h1h1h1h1h1h1h1h1h1h1h1h1h1h1h1h1h1h1h1h1h1h1h1h1h1h1h1h1h1h1h1h1h1h1h1h1h1h1h1h1h1h1h1h1h1h1h1h1h1h1h1h1h1h1h1h1h1h1h1h1h1h1h1h1h1h1h1h1h1h1h1h1h1h1h1h1h1h1h1h1h1h1h1h1h1h1h1h1h1h1h1h1h1h1h1h1h1h1h1h1h1h1h1h1h1h1h1h1h1h1h1h1h1h1h1h1h1h1h1h1h1h1h1h1h1h1h1h1h1h1h1h1h1h1h1h1h1h1h1h1h1h1h1h1h1h1h1h1h1h1h1h1h1h1h1h1h1h1h1h1h1h1h1h1h1h1h1h1h1h1h1h1h1h1h1h1h1h1h1h1h1h1h1h1h1h1h1h1h1h1h1h1h1h1h1h1h1h1h1h1h1h1h1h1h1h1h1h1h1h1h1h1h1h1h1h1h1h1h1h1h1h1h1h1h1h1h1h1h1h1h1h1h1h1h1h1h1h1h1h1h1h1h1h1h1h1h1h1h1h1h1h1h1h1h1h1h1h1h1h1h1h1h1h1h1h1h1h1h1h1h1h1h1h1h1h1h1h1h1h1h1h1h1h1h1h1h1h1h1h1h1h1h1h1h1h1h1h1h1h1h1h1h1h1h1h1h1h1h1h1h1h1h1h1h1h1h1h1h1h1h1h1h1h1h1h1h1h1h1h1h1h1h1h1h1h1h1h1h1h1h1h1h1h1h1h1h1h1h1h1h1h1h1h1h1h1h1h1h1h1h1h1h1h1h1h1h1h1h1h1h1h1h1h1h1h1h1h1h1h1h1h1h1h1h1h1h1h1h1h1h1h1h1h1h1h1h1h1h1h1h1h1h1h1h1h1h1h1h1h1h1h1h1h1h1h1h1h1h1h1h1h1h1h1h1h1h1h1h1h1h1h1h1h1h1h1h1h1h1h1h1h1h1h1h1h1h1h1h1h1h1h1h1h1h1h1h1h1h1h1h1h1h1h1h1h1h1h1h1h1h1h1h1h1h1h1h1h1h1h1h1h1h1h1h1h1h1h1h1h1h1h1h1h1h1h1h1h1h1h1h1h1h1h1h1h1h1h1h1h1h1h1h1h1h1h1h1h1h1h1h1h1h1h1h1h1h1h1h1h1h1h1h1h1h1h1h1h1h1h1h1h1h1h1h1h1h1h1h1h1h1h1h1h1h1h1h1h1h1h1h1h1h1h1h1h1h1h1h1h1h1h1h1h1h1h1h1h1h1h1h1h1h1h1h1h1h1h1h1h1h1h1h1h1h1h1h1h1h1h1h1h1h1h1h1h1h1h1h1h1h1h1h1h1h1h1h1h1h1h1h1h1h1h1h1h1h1h1h1h1h1h1h1h1h1h1h1h1h1h1h1h1h1h1h1h1h1h1h1h1h1h1h1h1h1h1h1h1h1h1h1h1h1h1h1h1h1h1h1h1h1h1h1h1h1h1h1h1h1h1h1h1h1h1h1h1h1h1h1h1h1h1h1h1h1h1h1h1h1h1h1h1h1h1h1h1h1h1h1h1h1h1h1h1h1h1h1h1h1h1h1h1h1h1h1h1h1h1h1h1h1h1h1h1h1h1h1h1h1h1h1h1h1h1h1h1h1h1h1h1h1h1h1h1h1h1h1h1h1h1h1h1h1h1h1V746h1h1h1h1V747h1V748h1h1h1V749h1h1h1V748h1h1h1V749h1V748h1V749h1V748h1V749h1V748h1h1h1V749h1V748h1h1h1V749h1V748h1h1V749h1h1V748h1V749h1V748h1h1h1h1h1h1h1h1h1h1h1h1h1h1h1h1h1h1h1h1V749h1h1V748h1V749h1h1V748h1h1V749h1V748h1h1h1h1h1h1h1h1h1h1h1h1h1h1h1h1h1h1h1h1h1h1h1h1V749h1h1h1h1V748h1h1V747h1h1h1h1h1h1h1h1h1h1h1h1h1h1h1h1h1h1h1h1h1h1h1h1h1h1h1h1h1h1h1h1h1h1h1h1h1h1h1h1h1h1h1h1h1h1h1h1h1h1h1h1h1h1h1h1h1h1h1h1h1h1h1h1h1h1h1h1h1h1h1h1h1h1h1h1h1h1h1h1h1h1h1h1h1h1h1h1h1h1h1h1h1h1h1h1h1h1h1h1h1h1h1h1h1h1h1h1h1h1h1h1h1h1h1h1h1h1h1h1h1h1h1h1h1h1h1h1h1h1h1h1h1h1h1h1h1h1h1h1h1h1h1h1h1h1h1h1h1h1h1h1h1h1h1h1h1h1h1h1h1h1h1h1h1h1h1h1h1h1h1h1h1h1h1h1h1h1h1h1h1h1h1h1h1h1h1h1h1h1h1h1h1h1h1h1h1h1h1h1h1h1h1h1h1h1h1h1h1h1h1h1h1h1h1h1h1h1h1h1h1h1h1h1h1h1h1h1h1h1V751h-1V752h-1V751h-1V751h-1V752h-1V752h-1V752h-1V751h-1V751h-1V751h-1V751h-1V751h-1V752h-1V751h-1V751h-1V752h-1V751h-1V751h-1V751h-1V751h-1V752h-1V752h-1V751h-1V751h-1V751h-1V751h-1V751h-1V752h-1V751h-1V752h-1V751h-1V752h-1V751h-1V752h-1V751h-1V751h-1V752h-1V751h-1V751h-1V751h-1V752h-1V752h-1V751h-1V752h-1V752h-1V751h-1V751h-1V751h-1V752h-1V752h-1V752h-1V751h-1V751h-1V751h-1V752h-1V751h-1V751h-1V751h-1V752h-1V752h-1V752h-1V752h-1V751h-1V751h-1V752h-1V752h-1V752h-1V751h-1V752h-1V751h-1V751h-1V751h-1V751h-1V752h-1V752h-1V751h-1V751h-1V752h-1V751h-1V752h-1V751h-1V751h-1V751h-1V752h-1V751h-1V752h-1V751h-1V752h-1V751h-1V752h-1V751h-1V752h-1V751h-1V751h-1V751h-1V751h-1V751h-1V751h-1V752h-1V751h-1V751h-1V751h-1V751h-1V752h-1V751h-1V752h-1V751h-1V752h-1V751h-1V751h-1V752h-1V752h-1V751h-1V752h-1V752h-1V751h-1V751h-1V751h-1V751h-1V752h-1V751h-1V752h-1V751h-1V752h-1V751h-1V751h-1V752h-1V752h-1V751h-1V751h-1V752h-1V752h-1V752h-1V751h-1V752h-1V751h-1V751h-1V752h-1V752h-1V752h-1V752h-1V752h-1V751h-1V751h-1V752h-1V752h-1V752h-1V751h-1V752h-1V752h-1V751h-1V752h-1V751h-1V752h-1V751h-1V752h-1V751h-1V751h-1V751h-1V752h-1V752h-1V752h-1V751h-1V752h-1V751h-1V751h-1V752h-1V751h-1V751h-1V751h-1V751h-1V752h-1V751h-1V751h-1V751h-1V752h-1V752h-1V751h-1V751h-1V752h-1V751h-1V752h-1V751h-1V751h-1V751h-1V751h-1V752h-1V751h-1V751h-1V752h-1V752h-1V752h-1V752h-1V751h-1V751h-1V751h-1V751h-1V752h-1V751h-1V752h-1V752h-1V751h-1V752h-1V751h-1V751h-1V752h-1V752h-1V751h-1V751h-1V752h-1V751h-1V751h-1V751h-1V751h-1V751h-1V751h-1V751h-1V751h-1V751h-1V751h-1V751h-1V751h-1V751h-1V751h-1V751h-1V751h-1V751h-1V752h-1V752h-1V752h-1V753h-1V753h-1V753h-1V754h-1V753h-1V753h-1V753h-1V753h-1V752h-1V752h-1V753h-1V752h-1V753h-1V753h-1V752h-1V753h-1V753h-1V753h-1V753h-1V753h-1V752h-1V753h-1V753h-1V753h-1V753h-1V752h-1V752h-1V753h-1V753h-1V753h-1V752h-1V752h-1V752h-1V752h-1V753h-1V753h-1V752h-1V752h-1V752h-1V752h-1V753h-1V753h-1V752h-1V753h-1V753h-1V753h-1V753h-1V753h-1V753h-1V753h-1V753h-1V753h-1V753h-1V753h-1V753h-1V753h-1V753h-1V753h-1V753h-1V752h-1V753h-1V753h-1V753h-1V753h-1V753h-1V752h-1V752h-1V753h-1V753h-1V753h-1V753h-1V753h-1V752h-1V753h-1V753h-1V753h-1V753h-1V753h-1V753h-1V753h-1V753h-1V753h-1V753h-1V753h-1V753h-1V753h-1V752h-1V751h-1V751h-1V751h-1V751h-1V752h-1V752h-1V752h-1V751h-1V751h-1V751h-1V752h-1V752h-1V752h-1V751h-1V752h-1V751h-1V751h-1V751h-1V752h-1V752h-1V751h-1V752h-1V751h-1V752h-1V751h-1V752h-1V752h-1V751h-1V752h-1V751h-1V752h-1V752h-1V751h-1V751h-1V752h-1V752h-1V752h-1V751h-1V751h-1V752h-1V751h-1V752h-1V751h-1V752h-1V751h-1V751h-1V751h-1V752h-1V751h-1V751h-1V752h-1V752h-1V752h-1V751h-1V752h-1V751h-1V752h-1V751h-1V752h-1V751h-1V752h-1V752h-1V752h-1V752h-1V751h-1V751h-1V751h-1V752h-1V751h-1V751h-1V752h-1V752h-1V751h-1V752h-1V751h-1V752h-1V752h-1V752h-1V752h-1V751h-1V751h-1V752h-1V751h-1V751h-1V751h-1V752h-1V752h-1V752h-1V752h-1V752h-1V751h-1V752h-1V752h-1V751h-1V751h-1V751h-1V751h-1V752h-1V752h-1V751h-1V751h-1V751h-1V751h-1V752h-1V751h-1V752h-1V752h-1V751h-1V751h-1V751h-1V751h-1V751h-1V751h-1V752h-1V752h-1V751h-1V751h-1V752h-1V752h-1V751h-1V751h-1V751h-1V751h-1V752h-1V751h-1V751h-1V751h-1V751h-1V751h-1V751h-1V751h-1V752h-1V752h-1V751h-1V752h-1V752h-1V752h-1V752h-1V751h-1V751h-1V752h-1V751h-1V751h-1V751h-1V752h-1V751h-1V752h-1V752h-1V751h-1V752h-1V752h-1V751h-1V752h-1V751h-1V752h-1V752h-1V752h-1V752h-1V751h-1V752h-1V751h-1V751h-1V751h-1V751h-1V752h-1V752h-1V752h-1V752h-1V752h-1V751h-1V751h-1V752h-1V751h-1V751h-1V751h-1V752h-1V752h-1V752h-1V752h-1V752h-1V752h-1V751h-1V752h-1V752h-1V752h-1V751h-1V751h-1V751h-1V751h-1V751h-1V752h-1V751h-1V751h-1V752h-1V751h-1V752h-1V751h-1V752h-1V752h-1V752h-1V752h-1V752h-1V752h-1V751h-1V751h-1V752h-1V751h-1V752h-1V752h-1V751h-1V752h-1V751h-1V751h-1V752h-1V752h-1V752h-1V752h-1V752h-1V751h-1V751h-1V752h-1V752h-1V752h-1V751h-1V752h-1V752h-1V751h-1V752h-1V751h-1V752h-1V751h-1V752h-1V752h-1V751h-1V751h-1V751h-1V751h-1V752h-1V752h-1V751h-1V752h-1V751h-1V752h-1V752h-1V751h-1V752h-1V752h-1V751h-1V751h-1V752h-1V752h-1V751h-1V752h-1V752h-1V751h-1V752h-1V751h-1V752h-1V752h-1V751h-1V752h-1V751h-1V752h-1V752h-1V752h-1V751h-1V751h-1V752h-1V752h-1V752h-1V752h-1V751h-1V752h-1V752h-1V751h-1V751h-1V752h-1V752h-1V752h-1V751h-1V751h-1V752h-1V751h-1V751h-1V752h-1V752h-1V752h-1V751h-1V752h-1V752h-1V751h-1V752h-1V752h-1V752h-1V751h-1V751h-1V752h-1V751h-1V751h-1V752h-1V751h-1V751h-1V751h-1V751h-1V752h-1V751h-1V751h-1V752h-1V752h-1V752h-1V752h-1V751h-1V752h-1V752h-1V751h-1V752h-1V752h-1V751h-1V752h-1V751h-1V751h-1V752h-1V752h-1V751h-1V751h-1V751h-1V752h-1V752h-1V751h-1V751h-1V752h-1V751h-1V752h-1V752h-1V751h-1V751h-1V751h-1V751h-1V752h-1V752h-1V751h-1V752h-1V751h-1V751h-1V751h-1V752h-1V751h-1V752h-1V751h-1V752h-1V752h-1V751h-1V752h-1V751h-1V752h-1V752h-1V751h-1V752h-1V751h-1V752h-1V751h-1V751h-1V751h-1V751h-1V752h-1V752h-1V752h-1V752h-1V752h-1V752h-1V751h-1V751h-1V752h-1V751h-1V751h-1V751h-1V751h-1V752h-1V751h-1V752h-1V751h-1V751h-1V751h-1V752h-1V752h-1V752h-1V752h-1V752h-1V751h-1V752h-1V751h-1V752h-1V752h-1V752h-1V752h-1V751h-1V752h-1V751h-1V752h-1V751h-1V752h-1V752h-1V752h-1V752h-1V752h-1V751h-1V752h-1V751h-1V751h-1V751h-1V752h-1V752h-1V751h-1V751h-1V752h-1V751h-1V751h-1V751h-1V751h-1V751h-1V751h-1V752h-1V752h-1V752h-1V752h-1V752h-1V752h-1V752h-1V751h-1V752h-1V752h-1V752h-1V751h-1V751h-1V752h-1V751h-1V752h-1V752h-1V752h-1V752h-1V751h-1V752h-1V751h-1V752h-1V751h-1V752h-1V751h-1V752h-1V751h-1V752h-1V752h-1V752h-1V751h-1V751h-1V752h-1V752h-1V752h-1V751h-1V751h-1V752h-1V751h-1V752h-1V751h-1V751h-1V752h-1V751h-1V752h-1V751h-1V751h-1V752h-1V751h-1V751h-1V752h-1V752h-1V751h-1V752h-1V752h-1V751h-1V752h-1V752h-1V751h-1V751h-1V751h-1V752h-1V752h-1V751h-1V752h-1V751h-1V752h-1V752h-1V751h-1V751h-1V751h-1V752h-1V751h-1V751h-1V751h-1V752h-1V752h-1V751h-1V751h-1V751h-1V751h-1V751h-1V751h-1V751h-1V751h-1V752h-1V751h-1V751h-1V751h-1V751h-1V751h-1V752h-1V751h-1V752h-1V751h-1V751h-1V752h-1V751h-1V752h-1V752h-1V751h-1V752h-1V751h-1V752h-1V752h-1V752h-1V751h-1V751h-1V752h-1V752h-1V752h-1V751h-1V752h-1V752h-1V751h-1V752h-1V751h-1V752h-1V751h-1V751h-1V752h-1V752h-1V752h-1V752h-1V752h-1V752h-1V751h-1V751h-1V751h-1V752h-1V751h-1V752h-1V751h-1V752h-1V752h-1V752h-1V752h-1V752h-1V752h-1V751h-1V751h-1V752h-1V751h-1V752h-1V751h-1V752h-1V751h-1V752h-1V751h-1V752h-1V751h-1V752h-1V751h-1V751h-1V751h-1V751h-1V751h-1V751h-1V751h-1V752h-1V752h-1V752h-1V751h-1V752h-1V752h-1V751h-1V751h-1V752h-1V751h-1V752h-1V752h-1V752h-1V752h-1V752h-1V752h-1V751h-1V751h-1V751h-1V752h-1V752h-1V751h-1V751h-1V752h-1V751h-1V752h-1V751h-1V752h-1V751h-1V752h-1V752h-1V752h-1V752h-1V751h-1V752h-1V751h-1V752h-1V752h-1V752h-1V751h-1V751h-1V752h-1V752h-1V751h-1V752h-1V751h-1V751h-1V752h-1V751h-1V752h-1V752h-1V752h-1V751h-1V751h-1V751h-1V751h-1V751h-1V751h-1V752h-1V751h-1V752h-1V751h-1V752h-1V751h-1V752h-1V752h-1V752h-1V752h-1V752h-1V752h-1V752h-1V752h-1V752h-1V752h-1V751h-1V752h-1V752h-1V751h-1V752h-1V751h-1V752h-1V752h-1V752h-1V752h-1V751h-1V752h-1V751h-1V752h-1V752h-1V752h-1V752h-1V751h-1V751h-1V752h-1V752h-1V752h-1V751h-1V751h-1V751h-1V751h-1V751h-1V752h-1V751h-1V752h-1V751h-1V751h-1V751h-1V752h-1V751h-1V751h-1V752h-1V752h-1V752h-1V751h-1V752h-1V751h-1V752h-1V751h-1V751h-1V751h-1V752h-1V752h-1V752h-1V751h-1V751h-1V751h-1V752h-1V752h-1V751h-1V752h-1V751h-1V751h-1V752h-1V752h-1V752h-1V752h-1V752h-1V751h-1V752h-1V752h-1V752h-1V752h-1V752h-1V752h-1V751h-1V751h-1V751h-1V751h-1V751h-1V751h-1V752h-1V751h-1V751h-1V751h-1V751h-1V751h-1V751h-1V752h-1V752h-1V752h-1V752h-1V751h-1V752h-1V751h-1V751h-1V751h-1V751h-1V751h-1V751h-1V752h-1V752h-1V751h-1V752h-1V752h-1V751h-1V751h-1V752h-1V752h-1V751h-1V751h-1V751h-1V751h-1V752h-1V751h-1V751h-1V752h-1V752h-1V752h-1V752h-1V752h-1V751h-1V751h-1V752h-1V751h-1V751h-1V751h-1V752h-1V752h-1V752h-1V752h-1V752h-1V751h-1V752h-1V752h-1V752h-1V752h-1V751h-1V751h-1V752h-1V752h-1V751h-1V752h-1V752h-1V752h-1V751h-1V752h-1V751h-1V751h-1V752h-1V751h-1V752h-1V751h-1V751h-1V752h-1V751h-1V751h-1V751h-1V751h-1V751h-1V752h-1V752h-1V751h-1V751h-1V751h-1V752h-1V751h-1V751h-1V751h-1V752h-1V751h-1V751h-1V752h-1V752h-1V752h-1V752h-1V752h-1V752h-1V751h-1V752h-1V751h-1V752h-1V751h-1V752h-1V752h-1V752h-1V751h-1V751h-1V752h-1V752h-1V752h-1V751h-1V751h-1V751h-1V751h-1V752h-1V751h-1V751h-1V752h-1V751h-1V752h-1V751h-1V751h-1V752h-1V751h-1V751h-1V751h-1V751h-1V751h-1V752h-1V751h-1V751h-1V752h-1V751h-1V752h-1V751h-1V751h-1V752h-1V752h-1V752h-1V752h-1V752h-1V752h-1V751h-1V751h-1V751h-1V752h-1V751h-1V752h-1V751h-1V751h-1V751h-1V751h-1V751h-1V751h-1V752h-1V752h-1V752h-1V752h-1V752h-1V751h-1V751h-1V751h-1V752h-1V751h-1V751h-1V751h-1V751h-1V752h-1V752h-1V752h-1V752h-1V752h-1V751h-1V751h-1V752h-1V752h-1V752h-1V752h-1V751h-1V752h-1V751h-1V752h-1V751h-1V752h-1V751h-1V752h-1V751h-1V751h-1V751h-1V751h-1V752h-1V752h-1V752h-1V752h-1V752h-1V752h-1V751h-1V751h-1V752h-1V751h-1V752h-1V751h-1V751h-1V751h-1V751h-1V752h-1V751h-1V751h-1V751h-1V751h-1V751h-1V751h-1V752h-1V751h-1V751h-1V751h-1V751h-1V751h-1V751h-1V751h-1V751h-1V751h-1V751h-1V751h-1V751h-1V751h-1V752h-1V751h-1V752h-1V752h-1V753h-1V753h-1V753h-1V754h-1V754h-1V753h-1V753h-1V753h-1V753h-1V753h-1V753h-1V753h-1V753h-1V752h-1V752h-1V753h-1V753h-1V753h-1V753h-1V753h-1V752h-1V753h-1V753h-1V753h-1V752h-1V752h-1V752h-1V753h-1V752h-1V753h-1V753h-1V753h-1V753h-1V753h-1V753h-1V753h-1V753h-1V753h-1V753h-1V753h-1V752h-1V753h-1V753h-1V753h-1V752h-1V752h-1V753h-1V753h-1V753h-1V753h-1V753h-1V753h-1V753h-1V753h-1V753h-1V753h-1V753h-1V753h-1V753h-1V753h-1V753h-1V753h-1V753h-1V753h-1V753h-1V753h-1V753h-1V753h-1V752h-1V752h-1V753h-1V753h-1V753h-1V753h-1V753h-1V753h-1V753h-1V753h-1V753h-1V753h-1V753h-1V753h-1V753h-1V753h-1V753h-1V753h-1V753h-1V752h-1V751h-1V750h-1V751h-1V752h-1V751h-1V751h-1V751h-1V752h-1V752h-1V751h-1V751h-1V752h-1V751h-1V751h-1V751h-1V752h-1V752h-1V751h-1V752h-1V751h-1V752h-1V751h-1V751h-1V752h-1V752h-1V752h-1V751h-1V752h-1V752h-1V752h-1V751h-1V751h-1V752h-1V751h-1V751h-1V751h-1V751h-1V751h-1V752h-1V752h-1V751h-1V751h-1V752h-1V752h-1V752h-1V751h-1V751h-1V751h-1V751h-1V752h-1V751h-1V752h-1V752h-1V751h-1V751h-1V752h-1V751h-1V751h-1V751h-1V752h-1V751h-1V751h-1V752h-1V751h-1V751h-1V751h-1V752h-1V752h-1V751h-1V752h-1V751h-1V751h-1V752h-1V751h-1V751h-1V751h-1V752h-1V752h-1V751h-1V752h-1V752h-1V751h-1V752h-1V752h-1V752h-1V751h-1V752h-1V751h-1V751h-1V752h-1V751h-1V751h-1V752h-1V751h-1V751h-1V752h-1V752h-1V752h-1V752h-1V752h-1V751h-1V751h-1V752h-1V751h-1V751h-1V751h-1V751h-1V751h-1V751h-1V751h-1V752h-1V752h-1V751h-1V751h-1V752h-1V752h-1V751h-1V752h-1V751h-1V752h-1V752h-1V751h-1V751h-1V752h-1V751h-1V751h-1V752h-1V751h-1V751h-1V752h-1V751h-1V751h-1V751h-1V751h-1V752h-1V752h-1V751h-1V752h-1V751h-1V751h-1V751h-1V751h-1V752h-1V752h-1V751h-1V752h-1V751h-1V751h-1V751h-1V752h-1V752h-1V752h-1V752h-1V751h-1V751h-1V751h-1V752h-1V751h-1V751h-1V752h-1V751h-1V751h-1V752h-1V751h-1V752h-1V751h-1V752h-1V751h-1V752h-1V752h-1V751h-1V751h-1V752h-1V752h-1V751h-1V752h-1V751h-1V752h-1V752h-1V751h-1V751h-1V751h-1V751h-1V751h-1V751h-1V752h-1V752h-1V752h-1V751h-1V752h-1V751h-1V751h-1V752h-1V752h-1V751h-1V752h-1V752h-1V752h-1V751h-1V751h-1V751h-1V752h-1V752h-1V751h-1V752h-1V752h-1V751h-1V751h-1V751h-1V751h-1V751h-1V751h-1V752h-1V751h-1V751h-1V752h-1V752h-1V752h-1V752h-1V751h-1V752h-1V751h-1V752h-1V751h-1V751h-1V752h-1V752h-1V752h-1V752h-1V752h-1V751h-1V752h-1V751h-1V752h-1V752h-1V752h-1V752h-1V752h-1V752h-1V752h-1V752h-1V752h-1V751h-1V751h-1V751h-1V752h-1V751h-1V751h-1V751h-1V751h-1V751h-1V752h-1V752h-1V751h-1V752h-1V752h-1V751h-1V751h-1V752h-1V751h-1V752h-1V751h-1V751h-1V751h-1V752h-1V751h-1V751h-1V751h-1V752h-1V752h-1V751h-1V751h-1V752h-1V752h-1V751h-1V752h-1V752h-1V752h-1V752h-1V751h-1V752h-1V751h-1V752h-1V751h-1V751h-1V752h-1V752h-1V752h-1V751h-1V752h-1V751h-1V751h-1V751h-1V752h-1V752h-1V751h-1V752h-1V751h-1V752h-1V751h-1V751h-1V751h-1V751h-1V752h-1V751h-1V751h-1V751h-1V751h-1V751h-1V751h-1V752h-1V752h-1V752h-1Z" fill="#e8395b"/>
<path d="M13 727h1V728h1h1h1h1h1h1h1h1h1h1h1h1h1h1h1h1h1h1V727h1V728h1h1h1V727h1V728h1h1h1h1h1h1h1h1h1h1h1h1V727h1V728h1h1h1h1h1h1h1h1h1h1V727h1V728h1h1V727h1V728h1h1h1h1h1h1h1h1V727h1V728h1h1h1h1h1h1V727h1h1V728h1h1h1h1h1h1V727h1V728h1h1h1h1h1h1h1h1h1h1h1h1h1h1h1V727h1V728h1h1V727h1V728h1h1h1h1h1h1h1h1h1h1h1h1h1h1h1h1h1h1h1h1h1h1V727h1V728h1h1h1h1h1h1V727h1V728h1h1h1h1h1h1h1h1h1h1h1h1h1h1V727h1V728h1h1h1h1h1h1h1h1h1h1h1h1h1h1h1h1h1h1h1h1h1h1h1h1h1h1h1h1h1h1h1h1V727h1V728h1h1V727h1V728h1V727h1V728h1h1h1h1h1h1h1h1h1h1h1h1h1V727h1V728h1h1h1h1h1h1h1h1h1h1h1h1h1h1h1h1h1h1V727h1V728h1h1h1h1h1h1h1h1h1h1h1h1h1h1h1h1h1h1h1h1h1h1h1h1h1h1h1h1h1h1h1h1h1V727h1V728h1h1h1h1h1h1h1h1h1h1h1h1h1h1h1h1h1h1h1h1V727h1V728h1h1h1h1h1h1h1h1h1h1h1h1h1h1h1h1h1h1V727h1V728h1h1h1h1V727h1V728h1h1h1h1h1h1h1V727h1V728h1h1h1h1h1h1h1h1h1h1h1h1h1V731h-1V732h-1V731h-1V731h-1V731h-1V731h-1V731h-1V731h-1V731h-1V732h-1V731h-1V731h-1V731h-1V731h-1V731h-1V731h-1V731h-1V732h-1V731h-1V732h-1V731h-1V731h-1V732h-1V731h-1V731h-1V731h-1V731h-1V731h-1V731h-1V731h-1V731h-1V731h-1V731h-1V731h-1V731h-1V731h-1V732h-1V731h-1V731h-1V731h-1V731h-1V731h-1V731h-1V731h-1V731h-1V731h-1V731h-1V732h-1V731h-1V731h-1V731h-1V731h-1V731h-1V731h-1V731h-1V731h-1V731h-1V732h-1V731h-1V731h-1V732h-1V731h-1V732h-1V731h-1V731h-1V731h-1V731h-1V731h-1V731h-1V731h-1V732h-1V731h-1V731h-1V731h-1V731h-1V731h-1V731h-1V731h-1V731h-1V731h-1V731h-1V731h-1V731h-1V731h-1V731h-1V731h-1V731h-1V731h-1V731h-1V731h-1V731h-1V731h-1V731h-1V731h-1V731h-1V731h-1V731h-1V731h-1V731h-1V732h-1V731h-1V731h-1V732h-1V731h-1V731h-1V731h-1V731h-1V731h-1V731h-1V731h-1V731h-1V731h-1V731h-1V731h-1V731h-1V731h-1V732h-1V731h-1V731h-1V731h-1V731h-1V731h-1V731h-1V731h-1V731h-1V731h-1V731h-1V732h-1V731h-1V731h-1V731h-1V731h-1V731h-1V731h-1V731h-1V731h-1V731h-1V731h-1V732h-1V731h-1V731h-1V731h-1V731h-1V731h-1V732h-1V731h-1V731h-1V731h-1V731h-1V731h-1V731h-1V731h-1V732h-1V731h-1V731h-1V731h-1V732h-1V731h-1V731h-1V731h-1V731h-1V731h-1V731h-1V731h-1V732h-1V731h-1V731h-1V731h-1V731h-1V731h-1V732h-1V731h-1V731h-1V731h-1V731h-1V731h-1V731h-1V731h-1V731h-1V731h-1V731h-1V731h-1V731h-1V731h-1V731h-1V731h-1V731h-1V731h-1V731h-1V731h-1V731h-1V731h-1V731h-1V732h-1V731h-1V731h-1V731h-1V731h-1V731h-1V731h-1V731h-1V731h-1V731h-1V731h-1V731h-1V731h-1V731h-1V731h-1V732h-1V731h-1V731h-1V731h-1V731h-1V731h-1V731h-1V731h-1V732h-1V731h-1V731h-1V731h-1V731h-1V732h-1V731h-1V731h-1V732h-1V731h-1V731h-1V731h-1V731h-1V731h-1V732h-1V731h-1V731h-1V731h-1V732h-1V731h-1V731h-1V731h-1V731h-1V731h-1V732h-1V731h-1V731h-1V731h-1V732h-1V731h-1V731h-1V731h-1V731h-1V731h-1V731h-1V731h-1V731h-1V731h-1V731h-1V731h-1V732h-1V732h-1V731h-1V731h-1V731h-1V731h-1V731h-1V731h-1V731h-1V731h-1V731h-1V731h-1V731h-1V731h-1V731h-1V731h-1V731h-1V731h-1V732h-1V731h-1V731h-1V731h-1V731h-1V731h-1V731h-1V732h-1V731h-1V733h-1V731h-1V732h-1V731h-1V731h-1V732h-1V732h-1V731h-1V731h-1V731h-1V732h-1V731h-1V731h-1V731h-1V731h-1V731h-1V731h-1V731h-1V731h-1V731h-1V731h-1V731h-1V731h-1V731h-1V731h-1V731h-1V731h-1ZM325 569h1h1V568h1V569h1h1h1h1h1h1V568h1V569h1V568h1h1h1V567h1V568h1h1V567h1h1h1h1h1h1h1h1V566h1h1h1h1h1h1V565h1h1V566h1h1h1h1h1h1h1h1h1h1h1h1h1h1h1h1h1h1h1h1h1h1h1h1h1h1h1h1h1h1h1h1h1h1h1h1h1h1h1h1h1h1h1h1h1h1h1h1h1h1V575h-1V569h-1V569h-1V569h-1V569h-1V569h-1V569h-1V569h-1V569h-1V569h-1V569h-1V569h-1V569h-1V569h-1V569h-1V569h-1V569h-1V569h-1V569h-1V570h-1V569h-1V570h-1V569h-1V569h-1V569h-1V569h-1V570h-1V569h-1V569h-1V569h-1V569h-1V569h-1V570h-1V569h-1V569h-1V569h-1V569h-1V569h-1V569h-1V569h-1V570h-1V570h-1V570h-1V570h-1V569h-1V569h-1V570h-1V569h-1V569h-1V569h-1V569h-1V569h-1V569h-1V569h-1V569h-1V569h-1V569h-1V570h-1V570h-1V570h-1V570h-1V570h-1V570h-1V570h-1V570h-1V571h-1V571h-1V571h-1V571h-1V571h-1V572h-1V572h-1V572h-1V572h-1V572h-1V572h-1V572h-1V572h-1V573h-1V572h-1V572h-1V573h-1V573h-1ZM410 728h1V730h1h1h1h1V729h1h1V728h1h1h1h1h1h1h1h1h1h1h1h1h1h1h1h1h1h1h1V727h1V728h1h1h1h1h1h1V727h1V728h1h1h1h1h1h1h1h1h1h1h1h1h1h1h1h1V727h1V728h1h1h1h1h1h1h1h1h1h1h1h1h1h1h1h1h1h1h1h1h1h1h1h1h1h1h1h1V727h1V728h1h1h1h1h1h1h1h1h1h1h1h1h1h1h1h1h1h1V727h1V728h1h1h1h1h1h1h1h1h1h1h1h1h1h1h1h1V727h1V728h1h1V727h1V728h1h1V727h1V728h1h1h1h1h1h1h1h1h1h1h1h1h1h1h1h1h1h1h1h1h1h1h1h1h1h1h1h1h1h1V727h1V728h1h1h1h1h1V727h1V728h1h1h1h1h1h1h1h1h1h1h1h1h1V727h1V728h1h1h1h1h1h1h1h1h1h1h1h1h1h1h1h1h1h1h1h1h1h1h1h1h1h1h1h1h1h1h1h1h1h1h1h1h1h1h1h1h1h1h1h1h1h1h1h1h1h1h1h1h1h1h1h1h1h1h1V727h1V728h1h1h1h1h1h1h1h1h1h1h1h1h1h1h1h1V727h1V728h1h1h1h1h1h1h1h1h1h1h1h1h1h1h1h1h1h1h1h1h1h1h1h1V727h1V728h1h1h1h1h1h1h1h1h1h1h1h1h1h1h1h1h1h1h1h1h1h1h1h1h1h1h1h1V727h1h1V728h1h1h1h1h1h1h1h1h1h1h1h1h1h1h1h1h1h1h1h1h1h1h1h1h1h1h1h1V727h1V728h1h1h1h1h1h1h1h1h1h1h1h1h1h1h1h1h1h1h1h1h1h1V727h1V728h1V727h1V728h1h1h1h1h1h1h1h1h1h1h1h1h1h1h1h1h1h1h1h1h1h1h1h1h1h1h1V727h1V728h1h1V727h1V728h1h1V727h1h1V728h1h1h1h1h1h1h1h1h1h1h1h1h1h1h1V727h1V728h1h1h1h1V727h1V728h1h1h1h1h1h1h1h1h1h1h1h1h1h1h1h1h1h1h1h1h1h1h1h1V727h1V728h1h1h1h1h1h1h1h1h1h1h1h1h1h1h1h1h1h1h1h1h1h1h1h1h1h1h1V727h1V728h1h1h1h1h1h1h1h1h1h1h1h1h1h1h1V727h1V728h1h1V727h1V728h1h1h1h1h1h1h1h1h1h1V727h1V728h1h1h1h1h1h1h1h1h1V727h1V728h1h1h1h1h1h1h1h1h1h1h1h1h1h1h1h1h1h1V727h1V728h1h1h1h1h1h1h1h1h1h1h1h1h1h1h1h1h1h1V727h1V728h1h1h1h1V727h1V728h1h1h1h1h1h1h1h1h1h1h1h1V727h1V728h1h1h1h1h1h1h1h1h1h1h1V727h1V728h1h1h1h1h1h1V727h1h1h1V728h1h1h1h1h1h1h1h1h1h1h1h1h1h1h1h1h1V727h1V728h1h1h1h1h1h1h1h1h1h1h1h1h1h1h1h1V727h1V728h1h1h1h1h1h1h1h1h1h1V727h1V728h1h1h1h1h1h1h1h1h1h1h1h1h1h1h1h1h1h1h1h1h1h1h1h1h1h1V727h1V728h1h1h1h1h1h1h1h1h1h1h1h1h1h1h1h1h1h1V727h1V728h1h1h1h1h1V727h1V728h1h1h1h1h1V727h1V728h1h1h1h1h1h1h1h1h1h1h1h1h1h1h1h1h1h1h1h1h1h1h1V727h1V728h1h1h1h1h1h1h1h1h1h1h1h1h1h1h1h1h1h1V727h1V728h1h1h1h1h1h1h1h1V727h1V728h1V727h1V728h1h1h1h1h1h1h1h1h1h1h1h1h1h1h1h1h1h1h1h1h1h1h1h1h1h1V727h1V728h1h1h1h1h1h1h1h1h1h1h1h1h1V727h1h1V728h1h1h1h1V727h1V728h1h1h1h1h1h1h1h1h1h1h1h1h1V727h1V728h1V727h1h1V728h1h1h1h1h1h1h1h1h1V727h1V728h1h1h1h1h1h1h1h1h1h1h1h1h1V727h1V728h1h1h1h1h1h1V727h1V728h1h1h1h1h1h1h1h1h1h1h1h1V727h1V728h1h1h1h1h1h1h1h1h1h1V727h1V728h1V727h1V728h1h1h1h1h1h1h1h1h1h1h1h1h1h1h1h1h1h1h1h1h1h1V727h1V728h1h1h1h1h1h1h1h1h1h1h1h1h1h1h1h1V727h1V728h1h1h1h1h1h1h1h1V727h1V728h1h1h1h1h1h1h1V727h1V728h1h1h1h1h1h1h1h1h1h1V727h1V728h1h1h1h1h1h1h1h1h1h1h1h1h1h1h1h1h1h1h1h1h1V727h1V728h1h1h1h1h1h1h1h1V731h-1V731h-1V731h-1V731h-1V732h-1V731h-1V731h-1V732h-1V731h-1V732h-1V731h-1V731h-1V732h-1V731h-1V731h-1V731h-1V731h-1V731h-1V731h-1V731h-1V731h-1V731h-1V731h-1V731h-1V731h-1V731h-1V731h-1V731h-1V731h-1V731h-1V732h-1V731h-1V731h-1V731h-1V731h-1V731h-1V731h-1V731h-1V731h-1V731h-1V731h-1V731h-1V731h-1V731h-1V731h-1V731h-1V731h-1V731h-1V731h-1V731h-1V731h-1V731h-1V732h-1V732h-1V731h-1V731h-1V731h-1V731h-1V731h-1V732h-1V731h-1V731h-1V731h-1V731h-1V731h-1V731h-1V731h-1V731h-1V731h-1V731h-1V731h-1V731h-1V731h-1V732h-1V731h-1V732h-1V731h-1V731h-1V732h-1V731h-1V731h-1V731h-1V731h-1V731h-1V731h-1V731h-1V731h-1V731h-1V731h-1V732h-1V731h-1V731h-1V731h-1V731h-1V731h-1V731h-1V731h-1V732h-1V731h-1V731h-1V732h-1V731h-1V731h-1V731h-1V731h-1V731h-1V731h-1V731h-1V732h-1V732h-1V731h-1V731h-1V731h-1V731h-1V731h-1V731h-1V731h-1V731h-1V731h-1V731h-1V731h-1V731h-1V731h-1V732h-1V731h-1V731h-1V731h-1V731h-1V731h-1V732h-1V731h-1V732h-1V731h-1V731h-1V731h-1V731h-1V731h-1V731h-1V731h-1V731h-1V731h-1V731h-1V731h-1V731h-1V731h-1V731h-1V731h-1V731h-1V731h-1V731h-1V731h-1V731h-1V731h-1V731h-1V732h-1V731h-1V731h-1V731h-1V731h-1V731h-1V732h-1V731h-1V731h-1V731h-1V731h-1V731h-1V731h-1V731h-1V731h-1V731h-1V731h-1V731h-1V731h-1V731h-1V731h-1V731h-1V731h-1V732h-1V731h-1V731h-1V731h-1V732h-1V731h-1V731h-1V731h-1V732h-1V731h-1V731h-1V731h-1V731h-1V731h-1V731h-1V731h-1V731h-1V731h-1V731h-1V731h-1V731h-1V731h-1V732h-1V731h-1V731h-1V731h-1V731h-1V731h-1V731h-1V731h-1V731h-1V731h-1V731h-1V731h-1V731h-1V732h-1V731h-1V732h-1V731h-1V731h-1V731h-1V731h-1V731h-1V731h-1V731h-1V731h-1V731h-1V732h-1V731h-1V731h-1V731h-1V732h-1V732h-1V731h-1V731h-1V731h-1V731h-1V731h-1V731h-1V731h-1V731h-1V731h-1V731h-1V731h-1V731h-1V731h-1V731h-1V731h-1V731h-1V731h-1V731h-1V732h-1V731h-1V731h-1V731h-1V731h-1V731h-1V731h-1V731h-1V731h-1V731h-1V731h-1V732h-1V732h-1V731h-1V731h-1V731h-1V731h-1V731h-1V732h-1V731h-1V731h-1V731h-1V731h-1V731h-1V732h-1V731h-1V731h-1V731h-1V731h-1V731h-1V731h-1V731h-1V731h-1V732h-1V731h-1V731h-1V731h-1V731h-1V731h-1V732h-1V731h-1V731h-1V731h-1V732h-1V732h-1V731h-1V731h-1V731h-1V731h-1V731h-1V731h-1V731h-1V731h-1V733h-1V732h-1V731h-1V731h-1V731h-1V731h-1V731h-1V731h-1V731h-1V731h-1V731h-1V731h-1V732h-1V731h-1V731h-1V732h-1V731h-1V732h-1V732h-1V731h-1V731h-1V731h-1V731h-1V731h-1V731h-1V731h-1V732h-1V731h-1V732h-1V731h-1V731h-1V731h-1V731h-1V731h-1V731h-1V731h-1V732h-1V731h-1V731h-1V731h-1V731h-1V732h-1V732h-1V731h-1V731h-1V731h-1V731h-1V731h-1V731h-1V731h-1V731h-1V731h-1V731h-1V731h-1V731h-1V731h-1V731h-1V731h-1V731h-1V731h-1V732h-1V731h-1V731h-1V731h-1V731h-1V731h-1V731h-1V732h-1V731h-1V731h-1V731h-1V731h-1V731h-1V731h-1V731h-1V731h-1V731h-1V731h-1V731h-1V731h-1V731h-1V731h-1V731h-1V731h-1V731h-1V731h-1V731h-1V731h-1V731h-1V731h-1V731h-1V731h-1V731h-1V731h-1V731h-1V731h-1V731h-1V733h-1V731h-1V732h-1V731h-1V731h-1V731h-1V731h-1V731h-1V731h-1V731h-1V731h-1V732h-1V731h-1V731h-1V732h-1V731h-1V731h-1V731h-1V731h-1V731h-1V731h-1V732h-1V731h-1V732h-1V731h-1V732h-1V731h-1V731h-1V732h-1V731h-1V731h-1V731h-1V731h-1V731h-1V731h-1V731h-1V731h-1V731h-1V731h-1V731h-1V731h-1V731h-1V731h-1V731h-1V731h-1V731h-1V731h-1V731h-1V731h-1V731h-1V731h-1V731h-1V731h-1V731h-1V731h-1V732h-1V732h-1V731h-1V731h-1V731h-1V731h-1V731h-1V731h-1V731h-1V731h-1V731h-1V731h-1V731h-1V731h-1V731h-1V731h-1V731h-1V731h-1V731h-1V731h-1V732h-1V731h-1V732h-1V731h-1V731h-1V731h-1V731h-1V731h-1V731h-1V731h-1V732h-1V731h-1V732h-1V731h-1V731h-1V731h-1V731h-1V731h-1V731h-1V731h-1V731h-1V731h-1V731h-1V731h-1V731h-1V731h-1V731h-1V731h-1V731h-1V731h-1V731h-1V731h-1V731h-1V731h-1V731h-1V732h-1V731h-1V731h-1V732h-1V731h-1V731h-1V731h-1V731h-1V731h-1V731h-1V731h-1V732h-1V731h-1V731h-1V731h-1V731h-1V731h-1V731h-1V731h-1V731h-1V731h-1V731h-1V731h-1V731h-1V731h-1V731h-1V732h-1V732h-1V731h-1V731h-1V732h-1V731h-1V732h-1V731h-1V731h-1V731h-1V731h-1V732h-1V732h-1V731h-1V731h-1V731h-1V731h-1V731h-1V731h-1V731h-1V731h-1V732h-1V731h-1V731h-1V732h-1V731h-1V731h-1V731h-1V731h-1V731h-1V731h-1V731h-1V731h-1V731h-1V731h-1V731h-1V731h-1V731h-1V731h-1V731h-1V731h-1V731h-1V731h-1V731h-1V731h-1V731h-1V731h-1V732h-1V732h-1V731h-1V732h-1V731h-1V731h-1V731h-1V731h-1V731h-1V731h-1V731h-1V731h-1V731h-1V732h-1V731h-1V731h-1V731h-1V731h-1V731h-1V731h-1V731h-1V731h-1V732h-1V731h-1V731h-1V731h-1V731h-1V731h-1V731h-1V731h-1V731h-1V732h-1V731h-1V732h-1V731h-1V731h-1V731h-1V732h-1V731h-1V731h-1V731h-1V731h-1V731h-1V731h-1V732h-1V731h-1V731h-1V731h-1V731h-1V731h-1V731h-1V731h-1V731h-1V731h-1V731h-1V731h-1V731h-1V731h-1V731h-1V731h-1V731h-1V732h-1V731h-1V731h-1V731h-1V731h-1V731h-1V731h-1V731h-1V731h-1V731h-1V731h-1V731h-1V731h-1V731h-1V732h-1V731h-1V731h-1V731h-1V731h-1V731h-1V731h-1V731h-1V731h-1V731h-1V731h-1V732h-1V731h-1V731h-1V731h-1V731h-1V731h-1V731h-1V731h-1V731h-1V731h-1V731h-1V731h-1V731h-1V731h-1V731h-1V731h-1V731h-1V731h-1V731h-1V731h-1V731h-1V731h-1V731h-1V731h-1V732h-1V731h-1V731h-1V731h-1V731h-1V731h-1V732h-1V732h-1V731h-1V731h-1V731h-1V731h-1V731h-1V731h-1V731h-1V731h-1V731h-1V731h-1V731h-1V731h-1V731h-1V731h-1V731h-1V731h-1V731h-1V732h-1V732h-1V733h-1V731h-1V731h-1V731h-1V731h-1V732h-1V731h-1V731h-1V731h-1V731h-1V731h-1V731h-1V732h-1V731h-1V731h-1V732h-1V731h-1V732h-1V731h-1V731h-1V732h-1V731h-1V731h-1V732h-1V732h-1V731h-1V731h-1V731h-1V731h-1V731h-1V731h-1V732h-1V731h-1V732h-1V732h-1V731h-1V731h-1V732h-1V731h-1V732h-1V731h-1V731h-1V731h-1V731h-1V731h-1V731h-1V732h-1V731h-1V731h-1V731h-1V731h-1V731h-1V731h-1V731h-1V731h-1V731h-1V732h-1V731h-1V731h-1V731h-1V731h-1V731h-1V731h-1V731h-1V731h-1V731h-1V732h-1V731h-1V731h-1V731h-1V731h-1V731h-1V731h-1V731h-1V732h-1V731h-1V732h-1V731h-1V731h-1V731h-1V731h-1V731h-1V731h-1V731h-1V731h-1V731h-1V731h-1V731h-1V731h-1V731h-1V731h-1V731h-1V732h-1V731h-1V731h-1V731h-1V731h-1V731h-1V731h-1V732h-1V731h-1V732h-1V731h-1V731h-1V731h-1V731h-1V732h-1V731h-1V731h-1V731h-1V731h-1V731h-1V732h-1V732h-1V731h-1V731h-1V731h-1V732h-1V731h-1V731h-1V732h-1V731h-1V731h-1V731h-1V731h-1V731h-1V731h-1V731h-1V731h-1V731h-1V731h-1V731h-1V731h-1V731h-1V731h-1V731h-1V732h-1V731h-1V731h-1V731h-1V731h-1V731h-1V731h-1V731h-1V731h-1V731h-1V731h-1V731h-1V731h-1V731h-1V731h-1V731h-1V731h-1V731h-1V731h-1V731h-1V731h-1V731h-1V731h-1V731h-1V731h-1V731h-1V731h-1V731h-1V731h-1V731h-1V731h-1V731h-1V731h-1V731h-1V731h-1V731h-1V732h-1V731h-1V731h-1V731h-1V731h-1V731h-1V731h-1V731h-1V732h-1V731h-1V731h-1V731h-1V732h-1V731h-1V731h-1V731h-1V731h-1V731h-1V731h-1V731h-1V731h-1V731h-1V731h-1V731h-1V731h-1V731h-1V731h-1V731h-1V731h-1V731h-1V731h-1V731h-1V731h-1V732h-1V732h-1V731h-1V731h-1V731h-1V731h-1V731h-1V731h-1V731h-1V731h-1V731h-1V731h-1V731h-1V731h-1V731h-1V732h-1V732h-1V731h-1V731h-1V731h-1V731h-1V731h-1V731h-1V731h-1V731h-1V731h-1V732h-1V731h-1V731h-1V731h-1V731h-1V732h-1V732h-1V733h-1V733h-1V733h-1V734h-1V734h-1V733h-1ZM1375 569h1h1h1h1h1h1V568h1V569h1V568h1h1h1h1h1h1V567h1V566h1V567h1V566h1V567h1V566h1h1h1h1h1h1V565h1V566h1h1h1V564h1V566h1h1V565h1V566h1h1V565h1V566h1h1h1V565h1h1V566h1h1h1V565h1h1V566h1h1h1h1V565h1V566h1h1h1V565h1V566h1h1h1h1h1h1h1h1h1h1h1h1h1V565h1V566h1h1h1V565h1V566h1h1h1h1h1V565h1h1V566h1V569h-1V569h-1V569h-1V569h-1V570h-1V569h-1V569h-1V569h-1V569h-1V570h-1V569h-1V569h-1V569h-1V569h-1V569h-1V569h-1V569h-1V569h-1V569h-1V569h-1V569h-1V569h-1V569h-1V570h-1V569h-1V569h-1V569h-1V569h-1V569h-1V569h-1V569h-1V569h-1V569h-1V569h-1V569h-1V569h-1V569h-1V569h-1V569h-1V569h-1V569h-1V569h-1V569h-1V569h-1V569h-1V569h-1V569h-1V569h-1V569h-1V569h-1V569h-1V569h-1V569h-1V569h-1V569h-1V569h-1V569h-1V569h-1V569h-1V569h-1V570h-1V570h-1V570h-1V570h-1V570h-1V570h-1V570h-1V571h-1V571h-1V571h-1V571h-1V572h-1V571h-1V571h-1V572h-1V572h-1V572h-1V572h-1V572h-1V572h-1V572h-1ZM1459 727h1V731h1V730h1V729h1h1V728h1h1h1h1h1h1h1h1h1h1h1h1h1h1h1h1h1h1h1V727h1V728h1h1h1h1h1h1h1h1V727h1V728h1h1h1h1h1h1h1h1h1h1h1h1V727h1V728h1h1h1h1h1h1h1h1h1h1h1h1V727h1V728h1h1h1h1h1h1h1h1h1h1h1h1V727h1V728h1h1h1h1h1h1h1h1h1h1h1h1h1h1h1h1h1h1h1h1h1h1h1h1h1h1h1h1V727h1V728h1h1h1V727h1V728h1h1V727h1V728h1V727h1V728h1h1V727h1V728h1h1h1h1h1V727h1V728h1h1h1V727h1h1V728h1h1h1h1h1h1h1V727h1V728h1h1h1h1h1h1h1h1h1h1h1V727h1V728h1h1h1h1h1h1h1h1h1h1h1h1h1h1h1h1h1V727h1V728h1h1h1h1h1h1h1h1h1h1h1h1h1h1h1V727h1V728h1h1h1h1h1h1h1h1h1h1h1V727h1h1V728h1h1h1h1h1h1h1h1h1h1V727h1V728h1h1h1h1h1h1h1h1V727h1V728h1h1h1V727h1V728h1h1h1h1h1h1h1h1h1V727h1V728h1h1h1h1h1V727h1V728h1V731h-1V732h-1V731h-1V731h-1V731h-1V732h-1V731h-1V731h-1V731h-1V731h-1V732h-1V731h-1V731h-1V731h-1V731h-1V731h-1V731h-1V731h-1V731h-1V731h-1V731h-1V731h-1V731h-1V731h-1V731h-1V732h-1V731h-1V731h-1V731h-1V731h-1V731h-1V731h-1V731h-1V731h-1V731h-1V731h-1V731h-1V731h-1V731h-1V731h-1V731h-1V731h-1V731h-1V732h-1V732h-1V732h-1V732h-1V731h-1V731h-1V731h-1V732h-1V731h-1V731h-1V731h-1V731h-1V731h-1V731h-1V731h-1V731h-1V731h-1V731h-1V732h-1V731h-1V731h-1V731h-1V731h-1V731h-1V732h-1V731h-1V731h-1V731h-1V731h-1V731h-1V731h-1V731h-1V731h-1V731h-1V731h-1V731h-1V731h-1V731h-1V731h-1V731h-1V731h-1V731h-1V731h-1V732h-1V731h-1V731h-1V731h-1V731h-1V732h-1V731h-1V731h-1V731h-1V732h-1V731h-1V731h-1V731h-1V731h-1V731h-1V731h-1V731h-1V731h-1V731h-1V731h-1V731h-1V731h-1V731h-1V731h-1V731h-1V731h-1V731h-1V732h-1V731h-1V731h-1V731h-1V731h-1V731h-1V731h-1V731h-1V731h-1V731h-1V731h-1V731h-1V731h-1V732h-1V731h-1V731h-1V731h-1V731h-1V731h-1V731h-1V731h-1V731h-1V732h-1V731h-1V731h-1V732h-1V731h-1V731h-1V731h-1V731h-1V731h-1V731h-1V731h-1V731h-1V731h-1V731h-1V731h-1V732h-1V731h-1V731h-1V731h-1V731h-1V731h-1V731h-1V731h-1V731h-1V732h-1V731h-1V731h-1V731h-1V731h-1V731h-1V731h-1V731h-1V731h-1V731h-1V731h-1V731h-1V731h-1V731h-1V731h-1V731h-1V731h-1V731h-1V731h-1V732h-1V731h-1V731h-1V731h-1V731h-1V731h-1V731h-1V731h-1V731h-1V731h-1V731h-1V731h-1V731h-1V731h-1V731h-1V731h-1V731h-1V731h-1V731h-1V731h-1V731h-1V731h-1V731h-1V731h-1V732h-1V731h-1V731h-1V731h-1V731h-1V731h-1V731h-1V732h-1V731h-1V731h-1V731h-1V731h-1V731h-1V731h-1V732h-1V731h-1V732h-1V731h-1V731h-1V731h-1V731h-1V731h-1V731h-1V731h-1V732h-1V732h-1V733h-1V733h-1V734h-1V734h-1V734h-1Z" fill="#22d0d8"/><path d="M323 704h1V572h1V705h-1V730h-1ZM408 573h1V664h1V729h-1V664h-1ZM1372 711h1V588h1V571h1V588h-1V711h-1V730h-1ZM1456 567h1V600h1V716h1V730h-1V717h-1V600h-1Z" fill="#22d0d8" fill-opacity="0.72"/>
<path d="M13 235h1h1h1h1h1V234h1V235h1h1V233h1V235h1h1h1h1V234h1V235h1h1h1h1h1V234h1V235h1h1V234h1V235h1h1h1h1h1V234h1V235h1V234h1V235h1h1h1V233h1V235h1h1h1h1h1h1h1h1V234h1V235h1h1h1h1h1V234h1V235h1h1h1h1h1V234h1h1V235h1h1h1h1h1V234h1V235h1V234h1V235h1h1h1h1h1h1h1h1h1h1h1h1h1h1h1h1h1h1h1h1V233h1V235h1h1V234h1V235h1V234h1V235h1h1h1h1h1h1h1V234h1V235h1h1h1h1h1h1h1V233h1V235h1h1h1h1h1h1h1h1V234h1V235h1h1h1h1h1h1V234h1V235h1V234h1V235h1h1h1h1h1h1h1h1h1h1h1h1h1h1h1h1h1h1h1h1h1h1h1h1V234h1V235h1V234h1V235h1h1h1V234h1V235h1h1h1h1h1V234h1V235h1V234h1h1V235h1h1h1h1V234h1V235h1h1V234h1V235h1h1h1h1V233h1V235h1V234h1V235h1h1h1h1h1V234h1V235h1h1h1h1h1h1V234h1V235h1V233h1V234h1V235h1h1V234h1V235h1h1V234h1h1V235h1h1h1h1h1V234h1V235h1V234h1h1h1V235h1h1h1h1h1V234h1h1V235h1h1h1h1h1h1h1V233h1V235h1V234h1V235h1V233h1V234h1V235h1h1h1h1h1h1h1h1h1h1h1V234h1V235h1h1V234h1h1V235h1h1h1h1h1h1h1h1h1h1h1h1h1h1h1h1h1h1h1V234h1V233h1V235h1h1h1h1h1h1h1h1h1h1V233h1V235h1h1h1h1V234h1V235h1h1V234h1V235h1h1h1h1h1h1h1h1h1V234h1V235h1h1h1h1V234h1V235h1h1h1h1h1h1V242h-1V241h-1V240h-1V241h-1V241h-1V241h-1V241h-1V241h-1V240h-1V241h-1V241h-1V240h-1V241h-1V241h-1V241h-1V241h-1V241h-1V241h-1V241h-1V240h-1V241h-1V241h-1V241h-1V240h-1V241h-1V241h-1V240h-1V240h-1V241h-1V242h-1V241h-1V240h-1V241h-1V240h-1V241h-1V241h-1V241h-1V241h-1V242h-1V240h-1V241h-1V241h-1V241h-1V241h-1V243h-1V240h-1V240h-1V241h-1V241h-1V241h-1V241h-1V241h-1V241h-1V240h-1V241h-1V241h-1V241h-1V241h-1V241h-1V241h-1V240h-1V241h-1V240h-1V240h-1V241h-1V241h-1V241h-1V240h-1V241h-1V241h-1V241h-1V240h-1V241h-1V240h-1V241h-1V241h-1V241h-1V241h-1V241h-1V241h-1V241h-1V240h-1V241h-1V241h-1V241h-1V241h-1V241h-1V240h-1V241h-1V240h-1V240h-1V241h-1V241h-1V241h-1V241h-1V240h-1V241h-1V240h-1V241h-1V241h-1V240h-1V241h-1V241h-1V241h-1V241h-1V241h-1V241h-1V240h-1V241h-1V241h-1V242h-1V241h-1V241h-1V241h-1V241h-1V240h-1V240h-1V241h-1V241h-1V240h-1V241h-1V241h-1V241h-1V241h-1V240h-1V242h-1V241h-1V241h-1V240h-1V241h-1V240h-1V240h-1V240h-1V240h-1V241h-1V240h-1V240h-1V243h-1V241h-1V241h-1V241h-1V241h-1V241h-1V240h-1V241h-1V241h-1V241h-1V241h-1V240h-1V241h-1V241h-1V241h-1V241h-1V241h-1V241h-1V241h-1V240h-1V240h-1V241h-1V240h-1V240h-1V241h-1V242h-1V241h-1V241h-1V240h-1V241h-1V241h-1V242h-1V241h-1V240h-1V241h-1V241h-1V240h-1V240h-1V241h-1V241h-1V240h-1V240h-1V241h-1V241h-1V241h-1V241h-1V241h-1V241h-1V240h-1V240h-1V240h-1V241h-1V240h-1V241h-1V240h-1V241h-1V241h-1V241h-1V242h-1V241h-1V242h-1V240h-1V241h-1V240h-1V241h-1V241h-1V241h-1V240h-1V241h-1V240h-1V241h-1V242h-1V240h-1V241h-1V241h-1V241h-1V241h-1V240h-1V241h-1V241h-1V241h-1V241h-1V240h-1V241h-1V241h-1V242h-1V240h-1V241h-1V241h-1V241h-1V240h-1V241h-1V240h-1V241h-1V243h-1V241h-1V241h-1V241h-1V241h-1V241h-1V241h-1V240h-1V241h-1V240h-1V240h-1V240h-1V240h-1V240h-1V240h-1V240h-1V240h-1V241h-1V242h-1V241h-1V241h-1V241h-1V240h-1V242h-1V241h-1V241h-1V241h-1V241h-1V241h-1V240h-1V240h-1V241h-1V242h-1V240h-1V241h-1V240h-1V243h-1V241h-1V240h-1V241h-1V241h-1V241h-1V241h-1V241h-1V240h-1V241h-1V240h-1V241h-1V240h-1V241h-1V241h-1V240h-1V241h-1V241h-1V240h-1V241h-1V240h-1V240h-1V241h-1V240h-1V241h-1V240h-1V241h-1V241h-1V240h-1V240h-1V241h-1V240h-1V241h-1V241h-1V240h-1V240h-1V240h-1V241h-1V241h-1V240h-1V240h-1V240h-1V241h-1ZM325 336h1V343h1V344h1V346h1V344h1V345h1V343h1V341h1V338h1h1V337h1V336h1V334h1h1V332h1V330h1h1V329h1h1V328h1V327h1V326h1V325h1h1V323h1h1h1V322h1V321h1V320h1h1h1h1V319h1V318h1V317h1V318h1V317h1h1V316h1h1V315h1h1h1V314h1h1V313h1h1V312h1V311h1V310h1V312h1V311h1h1V310h1h1h1V309h1h1V308h1h1h1h1h1h1V307h1h1h1V305h1V307h1V306h1h1V305h1V306h1h1V304h1h1V305h1h1V304h1V305h1h1V302h1V310h-1V312h-1V311h-1V311h-1V311h-1V311h-1V311h-1V312h-1V311h-1V312h-1V312h-1V312h-1V312h-1V312h-1V312h-1V313h-1V313h-1V315h-1V314h-1V314h-1V313h-1V314h-1V315h-1V315h-1V315h-1V316h-1V315h-1V317h-1V316h-1V317h-1V317h-1V317h-1V318h-1V318h-1V318h-1V319h-1V320h-1V320h-1V320h-1V320h-1V321h-1V321h-1V322h-1V322h-1V323h-1V323h-1V325h-1V324h-1V324h-1V326h-1V325h-1V327h-1V327h-1V327h-1V329h-1V329h-1V329h-1V329h-1V330h-1V331h-1V332h-1V332h-1V333h-1V334h-1V335h-1V335h-1V336h-1V339h-1V339h-1V341h-1V342h-1V343h-1V344h-1V345h-1V348h-1V349h-1V350h-1V354h-1V352h-1V352h-1V352h-1V351h-1V349h-1ZM409 195h1V192h1V187h1V182h1V177h1V172h1V167h1V166h1V171h1V177h1V182h1V188h1V193h1V198h1h1V197h1V195h1V193h1h1h1h1h1V196h1h1V197h1h1V198h1V199h1V198h1V200h1V201h1h1V202h1h1V203h1V204h1h1h1h1V206h1V207h1V208h1h1V207h1V209h1h1V210h1V209h1V211h1h1h1V212h1V213h1h1h1V214h1h1V213h1V215h1h1h1V216h1h1V215h1V217h1h1h1h1V216h1V218h1V216h1V219h1h1h1V220h1h1h1V219h1V221h1h1h1V222h1h1h1h1V223h1V222h1V223h1h1h1V224h1h1h1h1h1h1h1V225h1h1h1h1h1V224h1V225h1V226h1V225h1V226h1h1h1h1V227h1V226h1h1V227h1h1h1V226h1h1V227h1h1h1h1V228h1h1h1h1h1h1h1V227h1V229h1h1h1h1h1V230h1h1h1h1h1h1V228h1V230h1h1h1h1h1h1V231h1h1h1V230h1V231h1h1V230h1V231h1V230h1V231h1V232h1h1h1h1V230h1V232h1h1h1h1h1h1h1h1h1V233h1h1h1V232h1V231h1V232h1V233h1h1h1h1h1V232h1V233h1h1h1h1h1h1V234h1V232h1V234h1V233h1V234h1h1h1V233h1V232h1V233h1V234h1h1h1h1V233h1h1V232h1V234h1V232h1V234h1V233h1V234h1h1V233h1V234h1h1V233h1V234h1V233h1V234h1V235h1V234h1h1V235h1V234h1h1V235h1V234h1V235h1V234h1V233h1V234h1h1V235h1h1V234h1V235h1h1V234h1h1V235h1h1h1h1h1V234h1h1h1V233h1h1V235h1h1h1V234h1V235h1h1h1V234h1V235h1V234h1V235h1h1h1h1h1h1h1h1h1V233h1V235h1V233h1V235h1V234h1V235h1h1h1h1V234h1V235h1h1h1h1h1V234h1V235h1h1h1h1h1h1h1h1V234h1h1V235h1V234h1V235h1h1h1h1h1h1h1h1h1h1h1V234h1V235h1h1h1h1h1h1h1h1h1h1h1h1h1h1h1h1h1h1h1V234h1V235h1h1h1V234h1V235h1h1h1h1h1V234h1V235h1V234h1V235h1h1h1h1h1h1h1h1V233h1V234h1V235h1h1h1h1h1h1h1h1h1h1h1h1h1h1h1h1h1V233h1V235h1h1h1h1h1h1h1h1h1h1h1h1h1h1h1h1h1h1h1h1h1h1h1h1h1h1h1h1V234h1V235h1V233h1V235h1h1h1h1h1h1V234h1h1V235h1h1h1V234h1V235h1h1h1h1h1V234h1V235h1h1h1h1h1h1h1h1h1h1h1h1h1h1V233h1V235h1h1V234h1V235h1h1h1h1h1h1h1h1h1h1h1h1h1V234h1V235h1V234h1V235h1h1h1h1h1h1h1h1h1h1h1h1h1h1V233h1V235h1h1h1h1h1h1h1h1h1h1h1h1h1h1h1h1h1h1h1h1h1h1h1V234h1V235h1h1h1V233h1V235h1h1V234h1V235h1h1h1h1h1h1h1h1V234h1V235h1h1h1h1h1h1h1h1h1h1h1h1h1h1h1h1h1h1h1h1h1h1h1h1h1h1h1h1h1h1h1h1h1h1h1h1h1h1h1h1h1h1h1h1h1h1V234h1V235h1h1V236h1V234h1V235h1h1h1V236h1V235h1h1h1h1h1h1h1V234h1V235h1h1h1h1h1h1h1h1h1h1h1h1h1h1h1h1h1h1h1h1h1h1h1h1h1h1h1h1h1h1h1h1V236h1V234h1V235h1V236h1V235h1h1h1h1h1h1h1h1V234h1V235h1h1h1V234h1V235h1h1h1h1V233h1V236h1V235h1h1h1h1h1V234h1V236h1V235h1V234h1V235h1h1h1h1h1h1h1V236h1V234h1V235h1h1V234h1V235h1V234h1V235h1h1V234h1V235h1V234h1V235h1h1h1h1h1h1h1V236h1V235h1h1h1V236h1V235h1h1h1h1h1h1V236h1V235h1h1h1h1V234h1V236h1h1V235h1V236h1V234h1V235h1V236h1h1V235h1h1h1V236h1V235h1h1h1V236h1V234h1V235h1h1V236h1V233h1V234h1V235h1h1h1h1h1V234h1V235h1h1V234h1V235h1h1h1h1h1h1h1V236h1V235h1h1V233h1V236h1V235h1h1h1V236h1V235h1V233h1V235h1h1h1h1h1h1V234h1V236h1V235h1V236h1V235h1V236h1h1V235h1h1h1h1h1h1V234h1V235h1h1V236h1h1V235h1h1h1V236h1h1V235h1h1h1h1V236h1V235h1V236h1V234h1V235h1h1h1h1V236h1V235h1h1h1V236h1V235h1h1V236h1V234h1h1V235h1V236h1V235h1h1V236h1V235h1V234h1V235h1h1h1h1V236h1V235h1h1h1h1h1V234h1V235h1h1h1h1V236h1V235h1V236h1h1V235h1h1V233h1V236h1V235h1V234h1h1h1V235h1V236h1V235h1h1h1h1h1h1h1V236h1V235h1h1h1h1h1h1V234h1V235h1h1h1V236h1h1V234h1V235h1h1h1h1h1h1h1h1h1V236h1V235h1h1h1h1V236h1h1V235h1h1h1h1h1h1V236h1V235h1h1h1h1h1h1V236h1h1V235h1h1h1V234h1V235h1V236h1h1V235h1V233h1V234h1V236h1V235h1V236h1h1h1V235h1h1V236h1V235h1V234h1V235h1h1h1V236h1V235h1h1V236h1V234h1V235h1h1h1h1h1V236h1h1h1V235h1h1V236h1V235h1h1h1V236h1V235h1h1h1h1h1h1h1V236h1V235h1V236h1V235h1h1h1h1V236h1h1V235h1h1h1h1V236h1h1V234h1V235h1V234h1V235h1h1V236h1V235h1h1V236h1h1h1V235h1h1h1V236h1V235h1h1V236h1V235h1h1V236h1V235h1h1V234h1V235h1V236h1V235h1h1V236h1V235h1V236h1V235h1h1h1V241h-1V241h-1V241h-1V241h-1V241h-1V241h-1V241h-1V241h-1V241h-1V241h-1V241h-1V241h-1V241h-1V241h-1V241h-1V243h-1V241h-1V241h-1V241h-1V241h-1V241h-1V241h-1V241h-1V241h-1V241h-1V242h-1V241h-1V241h-1V241h-1V241h-1V241h-1V241h-1V241h-1V243h-1V241h-1V241h-1V241h-1V241h-1V241h-1V241h-1V241h-1V241h-1V241h-1V241h-1V241h-1V241h-1V241h-1V241h-1V241h-1V241h-1V241h-1V241h-1V241h-1V241h-1V241h-1V241h-1V241h-1V241h-1V241h-1V241h-1V242h-1V242h-1V241h-1V241h-1V241h-1V242h-1V241h-1V241h-1V241h-1V241h-1V241h-1V241h-1V241h-1V241h-1V242h-1V241h-1V241h-1V241h-1V241h-1V241h-1V241h-1V242h-1V241h-1V241h-1V241h-1V241h-1V241h-1V241h-1V241h-1V241h-1V241h-1V241h-1V241h-1V241h-1V241h-1V241h-1V242h-1V241h-1V241h-1V242h-1V241h-1V241h-1V241h-1V242h-1V241h-1V241h-1V241h-1V241h-1V241h-1V241h-1V241h-1V241h-1V241h-1V241h-1V242h-1V241h-1V242h-1V243h-1V241h-1V241h-1V241h-1V241h-1V241h-1V241h-1V241h-1V241h-1V241h-1V241h-1V241h-1V241h-1V241h-1V242h-1V241h-1V241h-1V241h-1V241h-1V241h-1V241h-1V241h-1V241h-1V242h-1V241h-1V241h-1V241h-1V241h-1V241h-1V241h-1V242h-1V241h-1V241h-1V241h-1V241h-1V242h-1V241h-1V241h-1V241h-1V241h-1V241h-1V241h-1V241h-1V241h-1V243h-1V241h-1V241h-1V241h-1V241h-1V241h-1V241h-1V241h-1V242h-1V242h-1V241h-1V241h-1V242h-1V241h-1V241h-1V241h-1V241h-1V241h-1V241h-1V241h-1V241h-1V241h-1V241h-1V241h-1V241h-1V242h-1V241h-1V241h-1V241h-1V241h-1V243h-1V241h-1V241h-1V241h-1V242h-1V243h-1V241h-1V241h-1V241h-1V241h-1V241h-1V241h-1V241h-1V241h-1V241h-1V241h-1V241h-1V241h-1V242h-1V241h-1V241h-1V241h-1V241h-1V241h-1V241h-1V241h-1V241h-1V241h-1V241h-1V241h-1V241h-1V241h-1V241h-1V241h-1V241h-1V241h-1V241h-1V242h-1V241h-1V241h-1V241h-1V241h-1V241h-1V241h-1V241h-1V241h-1V241h-1V241h-1V241h-1V241h-1V241h-1V241h-1V241h-1V241h-1V241h-1V241h-1V241h-1V241h-1V242h-1V241h-1V241h-1V241h-1V241h-1V241h-1V241h-1V241h-1V241h-1V241h-1V241h-1V241h-1V242h-1V241h-1V242h-1V241h-1V241h-1V241h-1V241h-1V241h-1V242h-1V242h-1V241h-1V241h-1V241h-1V242h-1V241h-1V241h-1V241h-1V241h-1V241h-1V241h-1V241h-1V241h-1V241h-1V241h-1V241h-1V242h-1V241h-1V241h-1V241h-1V241h-1V242h-1V241h-1V241h-1V241h-1V241h-1V241h-1V241h-1V241h-1V241h-1V241h-1V241h-1V241h-1V240h-1V241h-1V241h-1V241h-1V241h-1V241h-1V241h-1V241h-1V241h-1V240h-1V241h-1V241h-1V242h-1V241h-1V241h-1V241h-1V241h-1V241h-1V243h-1V241h-1V241h-1V241h-1V241h-1V241h-1V241h-1V241h-1V242h-1V241h-1V241h-1V240h-1V241h-1V243h-1V241h-1V241h-1V241h-1V241h-1V241h-1V242h-1V241h-1V241h-1V241h-1V241h-1V241h-1V241h-1V241h-1V241h-1V241h-1V242h-1V241h-1V241h-1V241h-1V241h-1V241h-1V241h-1V241h-1V241h-1V241h-1V242h-1V241h-1V241h-1V241h-1V241h-1V240h-1V241h-1V241h-1V241h-1V243h-1V240h-1V241h-1V241h-1V241h-1V241h-1V241h-1V241h-1V241h-1V242h-1V241h-1V241h-1V241h-1V241h-1V241h-1V241h-1V241h-1V241h-1V241h-1V241h-1V241h-1V240h-1V241h-1V240h-1V241h-1V240h-1V241h-1V241h-1V241h-1V241h-1V240h-1V241h-1V240h-1V241h-1V241h-1V240h-1V241h-1V242h-1V241h-1V241h-1V241h-1V241h-1V241h-1V242h-1V241h-1V241h-1V241h-1V241h-1V241h-1V240h-1V240h-1V241h-1V241h-1V241h-1V240h-1V241h-1V241h-1V241h-1V241h-1V242h-1V240h-1V241h-1V241h-1V241h-1V241h-1V241h-1V240h-1V241h-1V241h-1V241h-1V241h-1V241h-1V240h-1V242h-1V241h-1V241h-1V241h-1V241h-1V241h-1V241h-1V242h-1V241h-1V241h-1V241h-1V240h-1V240h-1V241h-1V240h-1V241h-1V241h-1V241h-1V241h-1V241h-1V241h-1V241h-1V240h-1V241h-1V241h-1V240h-1V243h-1V241h-1V241h-1V241h-1V242h-1V240h-1V242h-1V241h-1V241h-1V241h-1V241h-1V241h-1V241h-1V241h-1V241h-1V242h-1V240h-1V241h-1V241h-1V241h-1V241h-1V242h-1V241h-1V241h-1V241h-1V240h-1V241h-1V240h-1V241h-1V240h-1V241h-1V240h-1V241h-1V241h-1V243h-1V241h-1V242h-1V241h-1V240h-1V241h-1V241h-1V241h-1V241h-1V241h-1V241h-1V240h-1V241h-1V241h-1V241h-1V241h-1V241h-1V241h-1V241h-1V241h-1V241h-1V241h-1V241h-1V241h-1V241h-1V241h-1V241h-1V240h-1V241h-1V242h-1V240h-1V241h-1V242h-1V241h-1V240h-1V241h-1V241h-1V241h-1V241h-1V241h-1V241h-1V241h-1V241h-1V240h-1V241h-1V240h-1V240h-1V240h-1V241h-1V243h-1V241h-1V241h-1V241h-1V240h-1V241h-1V241h-1V241h-1V241h-1V240h-1V240h-1V240h-1V241h-1V241h-1V240h-1V242h-1V240h-1V240h-1V241h-1V240h-1V241h-1V242h-1V241h-1V241h-1V241h-1V241h-1V240h-1V241h-1V241h-1V241h-1V241h-1V242h-1V240h-1V241h-1V240h-1V241h-1V241h-1V241h-1V241h-1V241h-1V240h-1V241h-1V241h-1V241h-1V242h-1V241h-1V241h-1V241h-1V241h-1V242h-1V240h-1V240h-1V241h-1V241h-1V241h-1V241h-1V241h-1V240h-1V241h-1V240h-1V241h-1V241h-1V240h-1V241h-1V240h-1V240h-1V241h-1V240h-1V241h-1V241h-1V241h-1V241h-1V240h-1V241h-1V241h-1V240h-1V241h-1V240h-1V241h-1V241h-1V240h-1V241h-1V241h-1V241h-1V241h-1V241h-1V241h-1V241h-1V241h-1V242h-1V240h-1V241h-1V240h-1V241h-1V241h-1V241h-1V240h-1V241h-1V242h-1V241h-1V240h-1V241h-1V240h-1V241h-1V241h-1V241h-1V241h-1V241h-1V241h-1V242h-1V241h-1V240h-1V241h-1V243h-1V240h-1V241h-1V241h-1V241h-1V241h-1V241h-1V240h-1V240h-1V241h-1V241h-1V241h-1V241h-1V241h-1V240h-1V240h-1V240h-1V241h-1V241h-1V241h-1V240h-1V240h-1V240h-1V241h-1V241h-1V241h-1V241h-1V241h-1V242h-1V241h-1V241h-1V241h-1V241h-1V241h-1V242h-1V240h-1V242h-1V241h-1V241h-1V241h-1V241h-1V241h-1V240h-1V241h-1V241h-1V240h-1V241h-1V240h-1V242h-1V241h-1V240h-1V241h-1V240h-1V240h-1V241h-1V241h-1V242h-1V240h-1V241h-1V240h-1V240h-1V240h-1V240h-1V241h-1V240h-1V240h-1V241h-1V240h-1V240h-1V240h-1V240h-1V240h-1V240h-1V240h-1V240h-1V240h-1V240h-1V241h-1V240h-1V241h-1V240h-1V240h-1V241h-1V240h-1V240h-1V240h-1V240h-1V240h-1V239h-1V241h-1V240h-1V240h-1V239h-1V241h-1V240h-1V239h-1V240h-1V239h-1V239h-1V239h-1V240h-1V239h-1V239h-1V240h-1V239h-1V239h-1V239h-1V239h-1V239h-1V239h-1V239h-1V239h-1V239h-1V239h-1V239h-1V239h-1V239h-1V239h-1V239h-1V238h-1V239h-1V238h-1V240h-1V238h-1V238h-1V239h-1V238h-1V238h-1V238h-1V239h-1V238h-1V239h-1V238h-1V238h-1V237h-1V238h-1V237h-1V238h-1V239h-1V237h-1V237h-1V237h-1V237h-1V237h-1V237h-1V237h-1V237h-1V238h-1V236h-1V236h-1V237h-1V237h-1V236h-1V236h-1V237h-1V237h-1V236h-1V236h-1V236h-1V236h-1V235h-1V235h-1V236h-1V235h-1V235h-1V236h-1V235h-1V235h-1V235h-1V235h-1V236h-1V235h-1V234h-1V235h-1V235h-1V234h-1V233h-1V234h-1V233h-1V234h-1V233h-1V233h-1V233h-1V233h-1V233h-1V233h-1V232h-1V234h-1V232h-1V234h-1V232h-1V232h-1V232h-1V232h-1V231h-1V231h-1V232h-1V231h-1V231h-1V232h-1V230h-1V230h-1V230h-1V230h-1V230h-1V230h-1V230h-1V229h-1V230h-1V229h-1V229h-1V229h-1V229h-1V228h-1V228h-1V228h-1V227h-1V227h-1V228h-1V227h-1V227h-1V227h-1V226h-1V226h-1V225h-1V225h-1V225h-1V225h-1V224h-1V225h-1V224h-1V223h-1V224h-1V223h-1V223h-1V223h-1V222h-1V222h-1V222h-1V221h-1V221h-1V221h-1V221h-1V220h-1V220h-1V219h-1V220h-1V219h-1V218h-1V218h-1V218h-1V217h-1V216h-1V216h-1V216h-1V215h-1V215h-1V214h-1V213h-1V213h-1V213h-1V212h-1V211h-1V211h-1V210h-1V209h-1V209h-1V208h-1V207h-1V209h-1V206h-1V206h-1V205h-1V204h-1V204h-1V204h-1V203h-1V202h-1V201h-1V200h-1V199h-1V199h-1V201h-1V202h-1V204h-1V205h-1V206h-1V204h-1V199h-1V194h-1V188h-1V183h-1V178h-1V177h-1V183h-1V188h-1V193h-1V198h-1V200h-1V202h-1ZM1375 341h1V343h1V347h1V348h1h1V347h1V346h1V345h1V344h1V343h1V342h1h1V341h1h1V340h1h1V338h1V339h1h1V338h1V337h1h1h1V336h1h1h1h1h1V335h1h1h1h1h1V334h1h1h1h1V333h1h1h1h1h1V331h1V333h1h1h1h1h1h1h1h1h1h1h1h1h1V334h1V333h1V334h1h1h1V335h1V334h1V333h1V335h1h1h1V336h1V335h1V336h1h1h1V337h1h1h1h1h1V338h1h1h1h1V346h-1V344h-1V343h-1V344h-1V344h-1V343h-1V343h-1V343h-1V344h-1V342h-1V342h-1V342h-1V342h-1V341h-1V341h-1V341h-1V341h-1V341h-1V341h-1V340h-1V340h-1V340h-1V340h-1V339h-1V339h-1V339h-1V339h-1V339h-1V339h-1V339h-1V339h-1V339h-1V339h-1V339h-1V339h-1V338h-1V340h-1V340h-1V340h-1V339h-1V339h-1V340h-1V339h-1V340h-1V340h-1V339h-1V340h-1V341h-1V340h-1V341h-1V341h-1V341h-1V341h-1V342h-1V341h-1V342h-1V342h-1V342h-1V343h-1V343h-1V344h-1V344h-1V344h-1V344h-1V347h-1V345h-1V347h-1V347h-1V347h-1V348h-1V349h-1V349h-1V352h-1V351h-1V352h-1V353h-1V353h-1V354h-1V354h-1V353h-1V350h-1ZM1458 228h1V224h1V219h1V213h1V207h1V201h1V196h1V190h1V183h1V181h1V182h1V187h1V192h1V197h1V202h1V206h1V209h1V208h1V207h1V206h1V205h1V204h1h1h1V205h1h1V206h1V207h1V206h1V207h1V208h1V207h1V209h1V208h1V210h1V211h1h1h1V212h1V213h1V212h1V213h1h1h1V214h1V213h1V214h1V215h1h1h1V216h1h1h1V217h1h1V218h1V217h1V218h1h1V219h1V217h1V219h1V220h1h1V219h1V218h1V221h1V219h1V221h1h1V220h1V222h1h1h1h1h1V223h1h1V221h1V223h1h1h1h1V224h1V223h1V225h1V224h1V225h1h1h1h1V226h1h1V225h1V226h1h1V227h1h1V225h1V226h1V227h1h1h1V228h1h1h1h1h1h1V227h1V228h1h1V229h1V228h1h1V229h1h1h1h1h1V230h1V229h1V230h1h1h1h1h1V231h1V230h1V231h1h1h1h1V230h1V231h1h1V230h1h1h1V231h1h1V230h1V231h1h1h1h1h1V232h1h1V231h1V232h1h1h1h1h1h1h1V233h1V232h1h1h1h1h1V230h1V232h1V233h1h1h1h1V232h1V233h1h1h1V232h1V233h1h1h1h1h1h1V232h1V233h1h1h1h1V234h1V233h1V234h1h1h1V233h1V234h1h1h1h1h1h1h1h1V233h1V234h1h1V232h1V234h1V233h1V234h1h1V233h1V234h1h1h1h1V235h1V234h1h1h1h1h1V235h1V233h1V234h1h1h1h1h1V233h1V235h1V234h1h1h1V235h1h1V234h1V235h1V240h-1V241h-1V240h-1V240h-1V240h-1V241h-1V240h-1V240h-1V240h-1V240h-1V240h-1V242h-1V240h-1V241h-1V240h-1V240h-1V240h-1V240h-1V240h-1V240h-1V240h-1V239h-1V240h-1V240h-1V239h-1V239h-1V240h-1V239h-1V239h-1V240h-1V240h-1V240h-1V240h-1V240h-1V239h-1V240h-1V240h-1V239h-1V240h-1V239h-1V239h-1V240h-1V239h-1V240h-1V240h-1V239h-1V240h-1V241h-1V240h-1V239h-1V240h-1V239h-1V239h-1V239h-1V239h-1V239h-1V239h-1V238h-1V239h-1V239h-1V239h-1V239h-1V239h-1V239h-1V239h-1V239h-1V239h-1V238h-1V239h-1V239h-1V239h-1V238h-1V238h-1V238h-1V238h-1V238h-1V238h-1V238h-1V239h-1V237h-1V237h-1V238h-1V239h-1V238h-1V238h-1V237h-1V238h-1V238h-1V237h-1V239h-1V237h-1V238h-1V237h-1V238h-1V237h-1V236h-1V237h-1V237h-1V237h-1V238h-1V237h-1V236h-1V236h-1V237h-1V236h-1V236h-1V236h-1V236h-1V235h-1V236h-1V236h-1V235h-1V235h-1V235h-1V235h-1V236h-1V235h-1V235h-1V235h-1V235h-1V234h-1V234h-1V236h-1V234h-1V234h-1V235h-1V233h-1V234h-1V233h-1V234h-1V233h-1V233h-1V232h-1V234h-1V232h-1V232h-1V232h-1V232h-1V232h-1V233h-1V232h-1V233h-1V231h-1V231h-1V231h-1V231h-1V231h-1V231h-1V231h-1V230h-1V230h-1V229h-1V230h-1V230h-1V229h-1V229h-1V229h-1V229h-1V228h-1V228h-1V228h-1V227h-1V227h-1V228h-1V227h-1V227h-1V228h-1V227h-1V226h-1V226h-1V225h-1V225h-1V225h-1V225h-1V225h-1V224h-1V224h-1V223h-1V224h-1V223h-1V223h-1V223h-1V222h-1V223h-1V223h-1V221h-1V223h-1V221h-1V220h-1V220h-1V220h-1V219h-1V219h-1V220h-1V218h-1V218h-1V218h-1V218h-1V218h-1V216h-1V216h-1V216h-1V215h-1V214h-1V213h-1V214h-1V213h-1V213h-1V213h-1V211h-1V210h-1V210h-1V211h-1V212h-1V213h-1V215h-1V215h-1V216h-1V217h-1V212h-1V207h-1V203h-1V198h-1V194h-1V191h-1V197h-1V201h-1V207h-1V213h-1V219h-1V224h-1V230h-1V234h-1V238h-1Z" fill="#fcee21"/><path d="M323 238h1V258h1V340h-1V258h-1ZM408 199h1V305h-1ZM1373 238h1V319h1V344h-1V320h-1ZM1456 314h1V234h1V315h-1V342h-1Z" fill="#fcee21" fill-opacity="0.72"/>
<path d="M1400.4 548.5V582M1383.5 565.8H1417" stroke="#f7931e" stroke-width="1.1" stroke-dasharray="7 3" fill="none"/>
<line x1="1690.5" y1="83" x2="1690.5" y2="952" stroke="#f7931e" stroke-width="1" stroke-dasharray="5 5" shape-rendering="crispEdges"/>
</g>
<path d="M405.8 83H426.4L416.1 92.6Z" fill="#f7931e"/>
<path d="M407 94H425.2V113.2H420.2L416.1 120.2L412 113.2H407Z" fill="#000" stroke="#f7931e" stroke-width="2" stroke-linejoin="miter"/>
<path d="M411.3 99H420.4M415.85 99V108.8" stroke="#f7931e" stroke-width="1.9" fill="none"/>
<path d="M412 113.2H420.2L416.1 120.4Z" fill="#f7931e"/>
<path d="M579 59.5H572.5V75.5H579M572.5 68.2H1129.5M1123 59.5H1129.5V75.5H1123" stroke="#d0d0d0" stroke-width="1.2" fill="none"/>
<path d="M699 51H714.3L706.6 56.4Z" fill="#f7931e"/>
<path d="M701 66.5H712Q713 66.5 713 67.5V77.5Q713 78.5 712 78.5H709.3L706.4 82.6L703.5 78.5H701Q700 78.5 700 77.5V67.5Q700 66.5 701 66.5Z" fill="#000" stroke="#f7931e" stroke-width="1.1"/>
<path d="M703.2 70.3H709.8M706.5 70.3V76.5" stroke="#f7931e" stroke-width="1.7" fill="none"/>
<path d="M1637.5 91H1682.5Q1684 91 1684 92.5V135.5Q1684 137.5 1682.7 136.2Z" fill="#4d4d4d"/>
<circle cx="1674.0" cy="101.1" r="5.6" fill="none" stroke="#a8a8a8" stroke-width="2"/>
<path d="M1669.6 105.4L1662.0 112.2" stroke="#a8a8a8" stroke-width="3" stroke-linecap="round"/>
<path d="M1669.6 162.2L1681.6 152.4V160.4H1691V164H1681.6V172Z" fill="#fcee21"/>
<path d="M20 874.5H47" stroke="#000" stroke-width="1.6"/>
<path d="M19.5 839.6H46Q48 839.6 49.5 841.1L63 855.9000000000001L49.5 870.7Q48 872.2 46 872.2H19.5Q16.5 872.2 16.5 869.2V842.6Q16.5 839.6 19.5 839.6Z" fill="#1d1b08" stroke="#f2e82a" stroke-width="1.5" stroke-linejoin="round"/>
<path d="M19.5 875.6H46Q48 875.6 49.5 877.1L63 890.8L49.5 904.5Q48 906.0 46 906.0H19.5Q16.5 906.0 16.5 903.0V878.6Q16.5 875.6 19.5 875.6Z" fill="#22d0d8" stroke="#22d0d8" stroke-width="1.5" stroke-linejoin="round"/>
<path d="M19.5 908.8H46Q48 908.8 49.5 910.3L63 924.4L49.5 938.5Q48 940.0 46 940.0H19.5Q16.5 940.0 16.5 937.0V911.8Q16.5 908.8 19.5 908.8Z" fill="#1b080c" stroke="#e23f5d" stroke-width="1.5" stroke-linejoin="round"/>
</svg>
<div class="a" style="left:1638.7px;top:83.0px;width:51.3px;height:18.5px;background:#000;overflow:hidden"><span class="t" style="left:5.00px;top:0px;line-height:17px;font-size:16px;color:#22d0d8;letter-spacing:0.135px;transform:scale(1.0000,1.050);transform-origin:0 14px;">450 A</span></div>
<div class="a" style="left:1638.7px;top:169.5px;width:51.3px;height:19.0px;background:#000;overflow:hidden"><span class="t" style="left:5.00px;top:0px;line-height:17px;font-size:16px;color:#22d0d8;letter-spacing:0.135px;transform:scale(1.0000,1.050);transform-origin:0 14px;">400 A</span></div>
<div class="a" style="left:1638.7px;top:255.5px;width:51.3px;height:19.0px;background:#000;overflow:hidden"><span class="t" style="left:5.00px;top:0px;line-height:17px;font-size:16px;color:#22d0d8;letter-spacing:0.135px;transform:scale(1.0000,1.050);transform-origin:0 14px;">350 A</span></div>
<div class="a" style="left:1638.7px;top:342.5px;width:51.3px;height:19.0px;background:#000;overflow:hidden"><span class="t" style="left:5.00px;top:0px;line-height:17px;font-size:16px;color:#22d0d8;letter-spacing:0.135px;transform:scale(1.0000,1.050);transform-origin:0 14px;">300 A</span></div>
<div class="a" style="left:1638.7px;top:429.5px;width:51.3px;height:19.0px;background:#000;overflow:hidden"><span class="t" style="left:5.00px;top:0px;line-height:17px;font-size:16px;color:#22d0d8;letter-spacing:0.135px;transform:scale(1.0000,1.050);transform-origin:0 14px;">250 A</span></div>
<div class="a" style="left:1638.7px;top:516.5px;width:51.3px;height:19.0px;background:#000;overflow:hidden"><span class="t" style="left:5.00px;top:0px;line-height:17px;font-size:16px;color:#22d0d8;letter-spacing:0.135px;transform:scale(1.0000,1.050);transform-origin:0 14px;">200 A</span></div>
<div class="a" style="left:1638.7px;top:603.5px;width:51.3px;height:19.0px;background:#000;overflow:hidden"><span class="t" style="left:5.00px;top:0px;line-height:17px;font-size:16px;color:#22d0d8;letter-spacing:0.135px;transform:scale(1.0000,1.050);transform-origin:0 14px;">150 A</span></div>
<div class="a" style="left:1638.7px;top:690.5px;width:51.3px;height:19.0px;background:#000;overflow:hidden"><span class="t" style="left:5.00px;top:0px;line-height:17px;font-size:16px;color:#22d0d8;letter-spacing:0.135px;transform:scale(1.0000,1.050);transform-origin:0 14px;">100 A</span></div>
<div class="a" style="left:1647.2px;top:777.5px;width:42.8px;height:19.0px;background:#000;overflow:hidden"><span class="t" style="left:5.00px;top:0px;line-height:17px;font-size:16px;color:#22d0d8;letter-spacing:0.307px;transform:scale(1.0000,1.050);transform-origin:0 14px;">50 A</span></div>
<div class="a" style="left:1656.5px;top:864.5px;width:33.5px;height:19.0px;background:#000;overflow:hidden"><span class="t" style="left:5.00px;top:0px;line-height:17px;font-size:16px;color:#22d0d8;letter-spacing:0.250px;transform:scale(1.0000,1.050);transform-origin:0 14px;">0 A</span></div>
<svg style="left:0;top:0" width="1920" height="1080" viewBox="0 0 1920 1080"><path d="M1637.5 91H1682.5Q1684 91 1684 92.5V135.5Q1684 137.5 1682.7 136.2Z" fill="#4d4d4d"/><circle cx="1674.0" cy="101.1" r="5.6" fill="none" stroke="#a8a8a8" stroke-width="2"/><path d="M1669.6 105.4L1662.0 112.2" stroke="#a8a8a8" stroke-width="3" stroke-linecap="round"/><line x1="1690.5" y1="83" x2="1690.5" y2="952" stroke="#f7931e" stroke-width="1" stroke-dasharray="5 5" shape-rendering="crispEdges"/><path d="M1669.6 162.2L1681.6 152.4V160.4H1691V164H1681.6V172Z" fill="#fcee21"/></svg>
<span class="t" style="left:61.50px;top:931px;line-height:17px;font-size:16px;color:#b8b8b8;transform:scale(0.9500,1.050);transform-origin:0 14px;">-4 ms</span>
<span class="t" style="left:229.30px;top:931px;line-height:17px;font-size:16px;color:#b8b8b8;transform:scale(0.9500,1.050);transform-origin:0 14px;">-2 ms</span>
<span class="t" style="left:406.60px;top:931px;line-height:17px;font-size:16px;color:#b8b8b8;transform:scale(0.8895,1.050);transform-origin:0 14px;">0 s</span>
<span class="t" style="left:567.60px;top:931px;line-height:17px;font-size:16px;color:#b8b8b8;transform:scale(0.9411,1.050);transform-origin:0 14px;">2 ms</span>
<span class="t" style="left:735.40px;top:931px;line-height:17px;font-size:16px;color:#b8b8b8;transform:scale(0.9411,1.050);transform-origin:0 14px;">4 ms</span>
<span class="t" style="left:903.20px;top:931px;line-height:17px;font-size:16px;color:#b8b8b8;transform:scale(0.9411,1.050);transform-origin:0 14px;">6 ms</span>
<span class="t" style="left:1071.00px;top:931px;line-height:17px;font-size:16px;color:#b8b8b8;transform:scale(0.9411,1.050);transform-origin:0 14px;">8 ms</span>
<span class="t" style="left:1234.90px;top:931px;line-height:17px;font-size:16px;color:#b8b8b8;transform:scale(0.9266,1.050);transform-origin:0 14px;">10 ms</span>
<span class="t" style="left:1402.70px;top:931px;line-height:17px;font-size:16px;color:#b8b8b8;transform:scale(0.9266,1.050);transform-origin:0 14px;">12 ms</span>
<span class="t" style="left:1570.50px;top:931px;line-height:17px;font-size:16px;color:#b8b8b8;transform:scale(0.9266,1.050);transform-origin:0 14px;">14 ms</span>
<span class="t" style="left:28.50px;top:846px;line-height:17px;font-size:15px;color:#f2e82a;transform:scale(0.9260,1.000);transform-origin:0 14px;">C 1</span>
<span class="t" style="left:28.50px;top:881px;line-height:17px;font-size:15px;color:#000;transform:scale(0.9775,1.000);transform-origin:0 14px;">C 2</span>
<span class="t" style="left:28.50px;top:915px;line-height:17px;font-size:15px;color:#fff;transform:scale(0.9775,1.000);transform-origin:0 14px;">C 3</span>
<span class="t" style="left:65.80px;top:840px;line-height:28px;font-size:25px;color:#fcee21;transform:scale(0.9618,1.040);transform-origin:0 23px;-webkit-text-stroke:0;">12V</span>
<span class="t" style="left:66.40px;top:874px;line-height:28px;font-size:25px;color:#22d0d8;transform:scale(1.0000,1.040);transform-origin:0 23px;-webkit-text-stroke:0;">12</span><span class="t" style="left:94.60px;top:874px;line-height:28px;font-size:25px;color:#22d0d8;transform:scale(1.0000,1.040);transform-origin:0 23px;-webkit-text-stroke:0;">I</span>
<span class="t" style="left:64.20px;top:911px;line-height:25px;font-size:22.5px;color:#f0466a;transform:scale(0.9227,1.130);transform-origin:0 20px;-webkit-text-stroke:0;">PG</span>
<div class="a" style="left:1710px;top:46px;width:201px;height:910px;border-left:1px solid #5a534e;border-top:1px solid #5a534e;border-bottom:1px solid #5a534e"></div>
<span class="t" style="left:1759.70px;top:48px;line-height:21px;font-size:19px;color:#f4f4f4;letter-spacing:0.597px;font-weight:bold;">Add New...</span>
<div class="btn" style="left:1720px;top:77.5px;width:86px;height:51.5px"></div>
<div class="btn" style="left:1816px;top:77.5px;width:86px;height:51.5px"></div>
<div class="btn" style="left:1720px;top:139.5px;width:86px;height:51.5px"></div>
<div class="btn" style="left:1816px;top:139.5px;width:86px;height:51.5px"></div>
<div class="btn" style="left:1720px;top:201.5px;width:86px;height:51.5px"></div>
<div class="btn" style="left:1816px;top:201.5px;width:86px;height:51.5px"></div>
<div class="btn" style="left:1720px;top:268.5px;width:86px;height:51.5px"></div>
<div class="btn" style="left:1816px;top:268.5px;width:86px;height:51.5px"></div>
<span class="t" style="left:1729.20px;top:90px;line-height:22px;font-size:20px;color:#f2f2f2;transform:scale(0.9586,1.000);transform-origin:0 18px;">Cursors</span>
<span class="t" style="left:1826.00px;top:90px;line-height:22px;font-size:20px;color:#f2f2f2;letter-spacing:0.450px;">Callout</span>
<span class="t" style="left:1723.40px;top:152px;line-height:22px;font-size:20px;color:#f2f2f2;letter-spacing:0.167px;">Measure</span>
<span class="t" style="left:1828.20px;top:152px;line-height:22px;font-size:20px;color:#f2f2f2;transform:scale(0.9464,1.000);transform-origin:0 18px;">Search</span>
<span class="t" style="left:1731.10px;top:203px;line-height:22px;font-size:19.5px;color:#f2f2f2;transform:scale(0.9687,1.000);transform-origin:0 18px;">Results</span>
<span class="t" style="left:1738.80px;top:223px;line-height:22px;font-size:19.5px;color:#f2f2f2;letter-spacing:0.424px;">Table</span>
<span class="t" style="left:1840.70px;top:214px;line-height:22px;font-size:20px;color:#f2f2f2;letter-spacing:0.367px;">Plot</span>
<span class="t" style="left:1825.90px;top:281px;line-height:22px;font-size:20px;color:#f2f2f2;letter-spacing:0.383px;">More...</span>
<div class="a" style="left:1715px;top:260px;width:192px;height:1px;background:#5a534e"></div>
<div class="a" style="left:1715px;top:328px;width:192px;height:1px;background:#5a534e"></div>
<svg style="left:0;top:0" width="1920" height="1080" viewBox="0 0 1920 1080"><path d="M1750.7 283.0H1754.1M1750.7 301.6H1754.1M1756.7 283.0H1761.2M1756.7 301.6H1761.2M1764.1 283.0H1768.6M1764.1 301.6H1768.6M1771.3 283.0H1774.8M1771.3 301.6H1774.8M1751.9 281.8V285.2M1773.6 281.8V285.2M1751.9 287.5V290.9M1773.6 287.5V290.9M1751.9 293.8V297.1M1773.6 293.8V297.1M1751.9 299.4V302.8M1773.6 299.4V302.8" stroke="#bdbdbd" stroke-width="2.4" fill="none"/><path d="M1761 294.5L1756.6 297" stroke="#c2c2c2" stroke-width="2.8" stroke-linecap="round"/><circle cx="1765.1" cy="290.9" r="4.4" fill="#2d2d2e" stroke="#c2c2c2" stroke-width="1.8"/><path d="M1768.7 297.0L1777.4 302.0L1774.2 302.8L1776.4 306.0L1774.6 306.9L1772.6 303.8L1770.6 305.8Z" fill="#c6c6c6" stroke="#2a2a2a" stroke-width="0.5"/><circle cx="1703" cy="493.2" r="2.1" fill="#c0c0c0"/><circle cx="1703" cy="501.4" r="2.1" fill="#c0c0c0"/><circle cx="1703" cy="509.6" r="2.1" fill="#c0c0c0"/></svg>
<div class="badge" style="left:1715px;top:339px;width:192px;height:77px"><div class="h" style="height:24.5px;background:#58595b"></div><div class="h" style="top:24.5px;height:3px;background:#adadad"></div></div><span class="t" style="left:1723.50px;top:339px;line-height:22px;font-size:20px;color:#f2f2f2;transform:scale(0.9268,1.000);transform-origin:0 18px;">Meas 1</span><div class="a" style="left:1869.5px;top:343.3px;width:30px;height:17px;border-radius:7px;background:#fff540;border:1px solid #4a4a50"></div><span class="t" style="left:1879.69px;top:346px;line-height:15px;font-size:13px;color:#000;font-family:"Liberation Mono",monospace;">1</span><span class="t" style="left:1725.40px;top:369px;line-height:22px;font-size:19.5px;color:#000;letter-spacing:1.028px;">Maximum</span><div class="a" style="left:1715px;top:389px;width:192px;height:27px;overflow:hidden"><span class="t" style="left:10.40px;top:6px;line-height:22px;font-size:20px;color:#000;">µ': 12.38 V</span></div>
<div class="badge" style="left:1715px;top:422px;width:192px;height:77px"><div class="h" style="height:24.5px;background:#58595b"></div><div class="h" style="top:24.5px;height:3px;background:#adadad"></div></div><span class="t" style="left:1723.50px;top:422px;line-height:22px;font-size:20px;color:#f2f2f2;transform:scale(0.9451,1.000);transform-origin:0 18px;">Meas 2</span><div class="a" style="left:1869.5px;top:426.3px;width:30px;height:17px;border-radius:7px;background:#fff540;border:1px solid #4a4a50"></div><span class="t" style="left:1879.69px;top:429px;line-height:15px;font-size:13px;color:#000;font-family:"Liberation Mono",monospace;">1</span><span class="t" style="left:1725.40px;top:452px;line-height:22px;font-size:19.5px;color:#000;letter-spacing:1.321px;">Minimum</span><div class="a" style="left:1715px;top:472px;width:192px;height:27px;overflow:hidden"><span class="t" style="left:10.40px;top:6px;line-height:22px;font-size:20px;color:#000;letter-spacing:0.160px;">µ': 11.74 V</span></div>
<div class="badge" style="left:1715px;top:505px;width:192px;height:77px"><div class="h" style="height:24.5px;background:#000"></div><div class="h" style="top:24.5px;height:3px;background:#adadad"></div></div><span class="t" style="left:1723.50px;top:505px;line-height:22px;font-size:20px;color:#22d0d8;transform:scale(0.9451,1.000);transform-origin:0 18px;">Meas 3</span><div class="a" style="left:1869.5px;top:509.3px;width:30px;height:17px;border-radius:7px;background:#22d0d8;border:1px solid #4a4a50"></div><span class="t" style="left:1879.69px;top:512px;line-height:15px;font-size:13px;color:#000;font-family:"Liberation Mono",monospace;">2</span><span class="t" style="left:1725.40px;top:535px;line-height:22px;font-size:19.5px;color:#000;letter-spacing:1.028px;">Maximum</span><div class="a" style="left:1715px;top:555px;width:192px;height:27px;overflow:hidden"><span class="t" style="left:10.40px;top:6px;line-height:22px;font-size:20px;color:#000;letter-spacing:0.210px;">µ': 177.4 A</span></div>
<div class="badge" style="left:1715px;top:588px;width:192px;height:77px"><div class="h" style="height:24.5px;background:#58595b"></div><div class="h" style="top:24.5px;height:3px;background:#adadad"></div></div><span class="t" style="left:1723.50px;top:588px;line-height:22px;font-size:20px;color:#f2f2f2;transform:scale(0.9451,1.000);transform-origin:0 18px;">Meas 6</span><div class="a" style="left:1869.5px;top:592.3px;width:30px;height:17px;border-radius:7px;background:#22d0d8;border:1px solid #4a4a50"></div><span class="t" style="left:1879.69px;top:595px;line-height:15px;font-size:13px;color:#000;font-family:"Liberation Mono",monospace;">2</span><span class="t" style="left:1725.40px;top:618px;line-height:22px;font-size:19.5px;color:#000;letter-spacing:1.321px;">Minimum</span><div class="a" style="left:1715px;top:638px;width:192px;height:27px;overflow:hidden"><span class="t" style="left:10.40px;top:6px;line-height:22px;font-size:20px;color:#000;letter-spacing:0.210px;">µ': 80.98 A</span></div>
<div class="badge" style="left:1715px;top:671px;width:192px;height:77px"><div class="h" style="height:24.5px;background:#58595b"></div><div class="h" style="top:24.5px;height:3px;background:#adadad"></div></div><span class="t" style="left:1723.50px;top:671px;line-height:22px;font-size:20px;color:#f2f2f2;transform:scale(0.9527,1.000);transform-origin:0 18px;">Meas 4</span><div class="a" style="left:1869.5px;top:675.3px;width:30px;height:17px;border-radius:7px;background:#22d0d8;border:1px solid #4a4a50"></div><span class="t" style="left:1879.69px;top:678px;line-height:15px;font-size:13px;color:#000;font-family:"Liberation Mono",monospace;">2</span><span class="t" style="left:1725.40px;top:701px;line-height:22px;font-size:19.5px;color:#000;transform:scale(0.9009,1.000);transform-origin:0 18px;">RMS</span><div class="a" style="left:1715px;top:721px;width:192px;height:27px;overflow:hidden"><span class="t" style="left:10.40px;top:6px;line-height:22px;font-size:20px;color:#000;letter-spacing:0.210px;">µ': 96.29 A</span></div>
<div class="badge" style="left:1715px;top:754px;width:192px;height:77px"><div class="h" style="height:24.5px;background:#58595b"></div><div class="h" style="top:24.5px;height:3px;background:#adadad"></div></div><span class="t" style="left:1723.50px;top:754px;line-height:22px;font-size:20px;color:#f2f2f2;transform:scale(0.9451,1.000);transform-origin:0 18px;">Meas 5</span><div class="a" style="left:1869.5px;top:758.3px;width:30px;height:17px;border-radius:7px;background:#e8405f;border:1px solid #4a4a50"></div><span class="t" style="left:1879.69px;top:761px;line-height:15px;font-size:13px;color:#fff;font-family:"Liberation Mono",monospace;">3</span><span class="t" style="left:1725.40px;top:784px;line-height:22px;font-size:19.5px;color:#000;letter-spacing:1.028px;">Maximum</span><div class="a" style="left:1715px;top:804px;width:192px;height:27px;overflow:hidden"><span class="t" style="left:10.40px;top:6px;line-height:22px;font-size:20px;color:#000;">µ': 5.080 V</span></div>
<div class="badge" style="left:13px;top:961px;width:120px;height:107.5px"><div class="h" style="height:25.5px;background:#4b4822"></div><div class="h" style="top:25.5px;height:3px;background:#adadad"></div></div>
<span class="t" style="left:20.80px;top:962px;line-height:22px;font-size:20px;color:#f7f03a;transform:scale(0.8594,1.000);transform-origin:0 18px;">Ch</span><span class="t" style="left:50.00px;top:962px;line-height:22px;font-size:20px;color:#f7f03a;">1</span>
<span class="t" style="left:22.50px;top:991px;line-height:22px;font-size:20px;color:#000;letter-spacing:0.256px;">300 mV/div</span>
<span class="t" style="left:23.50px;top:1017px;line-height:22px;font-size:20px;color:#000;">1</span><span class="t" style="left:39.70px;top:1017px;line-height:22px;font-size:20px;color:#000;">M</span><span class="t" style="left:58.30px;top:1020px;line-height:19px;font-size:17px;color:#000;transform:scaleX(0.86);transform-origin:0 0;">Ω</span>
<span class="t" style="left:22.50px;top:1041px;line-height:22px;font-size:20px;color:#000;letter-spacing:0.120px;">20 MHz</span>
<span class="t" style="left:111.00px;top:1041px;line-height:14px;font-size:12.5px;color:#111;font-weight:bold;-webkit-text-stroke:0;">B</span><span class="t" style="left:118.10px;top:1047px;line-height:11px;font-size:9.8px;color:#111;font-weight:bold;-webkit-text-stroke:0;">W</span>
<div class="badge" style="left:140px;top:946.5px;width:120px;height:122px"><div class="h" style="height:25.5px;background:#22d0d8"></div><div class="h" style="top:25.5px;height:1.5px;background:#b2b2b2"></div><div class="h" style="top:31.5px;height:21.7px;background:#ff0000"></div></div>
<span class="t" style="left:147.70px;top:947px;line-height:22px;font-size:20px;color:#000;transform:scale(0.8594,1.000);transform-origin:0 18px;">Ch</span><span class="t" style="left:176.20px;top:947px;line-height:22px;font-size:20px;color:#000;">2</span>
<svg style="left:0;top:0" width="1920" height="1080" viewBox="0 0 1920 1080"><path d="M150.6 980.8L160.3 998.3H140.9Z" fill="#fff200" stroke="#4a2c68" stroke-width="1.1" stroke-linejoin="round"/><path d="M150.5 984V995.6" stroke="#a69a30" stroke-width="2.2"/></svg>
<span class="t" style="left:161.60px;top:976px;line-height:22px;font-size:20px;color:#fff;transform:scale(0.9907,1.000);transform-origin:0 18px;">Over Rng</span>
<span class="t" style="left:149.80px;top:1001px;line-height:22px;font-size:20px;color:#000;letter-spacing:0.343px;">50 A/div</span>
<span class="t" style="left:150.80px;top:1027px;line-height:22px;font-size:20px;color:#000;">1</span><span class="t" style="left:167.00px;top:1027px;line-height:22px;font-size:20px;color:#000;">M</span><span class="t" style="left:185.60px;top:1030px;line-height:19px;font-size:17px;color:#000;transform:scaleX(0.86);transform-origin:0 0;">Ω</span>
<div class="a" style="left:140px;top:1040px;width:120px;height:28.5px;overflow:hidden"><span class="t" style="left:9.80px;top:10px;line-height:22px;font-size:20px;color:#000;letter-spacing:0.120px;">20 MHz</span></div>
<span class="t" style="left:238.00px;top:1051px;line-height:14px;font-size:12.5px;color:#111;font-weight:bold;-webkit-text-stroke:0;">B</span><span class="t" style="left:245.10px;top:1057px;line-height:11px;font-size:9.8px;color:#111;font-weight:bold;-webkit-text-stroke:0;">W</span>
<div class="badge" style="left:267px;top:961px;width:120px;height:107.5px"><div class="h" style="height:25.5px;background:#46262b"></div><div class="h" style="top:25.5px;height:3px;background:#adadad"></div></div>
<span class="t" style="left:274.60px;top:962px;line-height:22px;font-size:20px;color:#fff;transform:scale(0.8594,1.000);transform-origin:0 18px;">Ch</span><span class="t" style="left:303.40px;top:962px;line-height:22px;font-size:20px;color:#fff;">3</span>
<span class="t" style="left:278.20px;top:991px;line-height:22px;font-size:20px;color:#000;transform:scale(0.9902,1.000);transform-origin:0 18px;">1 V/div</span>
<span class="t" style="left:278.20px;top:1017px;line-height:22px;font-size:20px;color:#000;">1</span><span class="t" style="left:294.40px;top:1017px;line-height:22px;font-size:20px;color:#000;">M</span><span class="t" style="left:313.00px;top:1020px;line-height:19px;font-size:17px;color:#000;transform:scaleX(0.86);transform-origin:0 0;">Ω</span>
<span class="t" style="left:276.60px;top:1041px;line-height:22px;font-size:20px;color:#000;letter-spacing:0.120px;">20 MHz</span>
<span class="t" style="left:365.00px;top:1041px;line-height:14px;font-size:12.5px;color:#111;font-weight:bold;-webkit-text-stroke:0;">B</span><span class="t" style="left:372.10px;top:1047px;line-height:11px;font-size:9.8px;color:#111;font-weight:bold;-webkit-text-stroke:0;">W</span>
<div class="btn" style="left:775.2px;top:960.5px;width:52.799999999999955px;height:106.5px;background:linear-gradient(#454749 0%,#3a3b3c 5%,#2f2f30 14%,#2b2b2c 50%,#2c2c2d 88%,#343435 97%,#262626 100%)"></div><div class="a" style="left:780.2px;top:970.8px;width:43.19999999999995px;height:3.4px;border-radius:1.7px;background:#8cd62a"></div>
<span class="t" style="left:794.18px;top:1004px;line-height:30px;font-size:26px;color:#f2f2f2;">4</span>
<div class="a" style="left:841px;top:961px;width:1px;height:106px;background:#5a534e"></div>
<div class="btn" style="left:856.2px;top:960.5px;width:52.59999999999991px;height:106.5px;background:linear-gradient(#454749 0%,#3a3b3c 5%,#2f2f30 14%,#2b2b2c 50%,#2c2c2d 88%,#343435 97%,#262626 100%)"></div><div class="a" style="left:861.2px;top:970.8px;width:42.99999999999991px;height:3.4px;border-radius:1.7px;background:#f7931e"></div>
<div class="btn" style="left:916.2px;top:960.5px;width:53.19999999999993px;height:106.5px;background:linear-gradient(#454749 0%,#3a3b3c 5%,#2f2f30 14%,#2b2b2c 50%,#2c2c2d 88%,#343435 97%,#262626 100%)"></div><div class="a" style="left:921.2px;top:970.8px;width:43.59999999999993px;height:3.4px;border-radius:1.7px;background:#b7bccb"></div>
<div class="btn" style="left:976.8px;top:960.5px;width:52.700000000000045px;height:106.5px;background:linear-gradient(#454749 0%,#3a3b3c 5%,#2f2f30 14%,#2b2b2c 50%,#2c2c2d 88%,#343435 97%,#262626 100%)"></div><div class="a" style="left:981.8px;top:970.8px;width:43.100000000000044px;height:3.4px;border-radius:1.7px;background:#c85aff"></div>
<span class="t" style="left:863.55px;top:988px;line-height:22px;font-size:19.5px;color:#f2f2f2;letter-spacing:1.395px;">Add</span>
<span class="t" style="left:862.30px;top:1008px;line-height:22px;font-size:19.5px;color:#f2f2f2;letter-spacing:0.451px;">New</span>
<span class="t" style="left:858.55px;top:1028px;line-height:22px;font-size:19.5px;color:#f2f2f2;letter-spacing:1.371px;">Math</span>
<span class="t" style="left:924.05px;top:988px;line-height:22px;font-size:19.5px;color:#f2f2f2;letter-spacing:1.395px;">Add</span>
<span class="t" style="left:922.80px;top:1008px;line-height:22px;font-size:19.5px;color:#f2f2f2;letter-spacing:0.451px;">New</span>
<span class="t" style="left:927.55px;top:1028px;line-height:22px;font-size:19.5px;color:#f2f2f2;letter-spacing:0.040px;">Ref</span>
<span class="t" style="left:984.45px;top:988px;line-height:22px;font-size:19.5px;color:#f2f2f2;letter-spacing:1.395px;">Add</span>
<span class="t" style="left:983.20px;top:1008px;line-height:22px;font-size:19.5px;color:#f2f2f2;letter-spacing:0.451px;">New</span>
<span class="t" style="left:987.70px;top:1028px;line-height:22px;font-size:19.5px;color:#f2f2f2;transform:scale(0.9216,1.000);transform-origin:0 18px;">Bus</span>
<div class="a" style="left:1043px;top:961px;width:1px;height:106px;background:#5a534e"></div>
<div class="badge" style="left:1057.5px;top:962.5px;width:265.5px;height:105.0px"><div class="h" style="height:25px;background:#58595b"></div><div class="h" style="top:25px;height:3px;background:#adadad"></div></div>
<span class="t" style="left:1065.90px;top:963px;line-height:22px;font-size:20px;color:#f2f2f2;letter-spacing:0.744px;">Horizontal</span>
<span class="t" style="left:1066.30px;top:991px;line-height:22px;font-size:20px;color:#000;letter-spacing:-0.029px;">2 ms/div</span>
<span class="t" style="left:1207.40px;top:991px;line-height:22px;font-size:20px;color:#000;transform:scale(0.9596,1.000);transform-origin:0 18px;">20 ms</span>
<span class="t" style="left:1066.30px;top:1015px;line-height:22px;font-size:20px;color:#000;transform:scale(0.9224,1.000);transform-origin:0 18px;">SR: 12.5 MS/s</span>
<span class="t" style="left:1207.40px;top:1015px;line-height:22px;font-size:20px;color:#000;letter-spacing:0.143px;">80 ns/pt</span>
<span class="t" style="left:1066.30px;top:1041px;line-height:22px;font-size:20px;color:#000;transform:scale(0.9777,1.000);transform-origin:0 18px;">RL: 250 kpts</span>
<span class="t" style="left:1224.50px;top:1041px;line-height:22px;font-size:20px;color:#000;transform:scale(0.9800,1.000);transform-origin:0 18px;">24%</span>
<svg style="left:0;top:0" width="1920" height="1080" viewBox="0 0 1920 1080"><rect x="1207.95" y="1044.55" width="10.2" height="10.6" fill="#000" stroke="#f7931e" stroke-width="1.7"/><path d="M1210.4 1055.6H1216.2L1213.3 1060.2Z" fill="#f7931e"/><path d="M1209.7 1047.3H1216.7M1213.2 1047.3V1053.2" stroke="#fff" stroke-width="1.7" fill="none"/></svg>
<div class="badge" style="left:1331.5px;top:962.5px;width:211.5px;height:105.0px"><div class="h" style="height:25px;background:#58595b"></div><div class="h" style="top:25px;height:3px;background:#adadad"></div></div>
<span class="t" style="left:1338.50px;top:963px;line-height:22px;font-size:20px;color:#f2f2f2;letter-spacing:0.433px;">Trigger</span>
<div class="a" style="left:1339.9px;top:992.8px;width:40px;height:22.4px;border-radius:6px;background:#fff540;border:1.2px solid #161616"></div>
<span class="t" style="left:1353.89px;top:991px;line-height:22px;font-size:19.5px;color:#000;">1</span>
<svg style="left:0;top:0" width="1920" height="1080" viewBox="0 0 1920 1080"><path d="M1390.2 1010.5H1395.6L1405.5 997.8H1410.7" fill="none" stroke="#5d5a96" stroke-width="1.9" stroke-linejoin="round"/></svg>
<span class="t" style="left:1423.10px;top:991px;line-height:22px;font-size:20px;color:#000;transform:scale(0.9516,1.000);transform-origin:0 18px;">12.4 V</span>
<span class="t" style="left:1341.30px;top:1016px;line-height:22px;font-size:20px;color:#000;transform:scale(0.9806,1.000);transform-origin:0 18px;">Noise Reject</span>
<div class="badge" style="left:1552px;top:962.5px;width:198.29999999999995px;height:105.0px"><div class="h" style="height:25px;background:#58595b"></div><div class="h" style="top:25px;height:3px;background:#adadad"></div></div>
<span class="t" style="left:1559.70px;top:963px;line-height:22px;font-size:20px;color:#f2f2f2;letter-spacing:0.610px;">Acquisition</span>
<span class="t" style="left:1560.60px;top:991px;line-height:22px;font-size:20px;color:#000;letter-spacing:0.825px;">Auto,</span>
<span class="t" style="left:1663.70px;top:991px;line-height:22px;font-size:20px;color:#000;letter-spacing:0.267px;">Analyze</span>
<span class="t" style="left:1560.60px;top:1016px;line-height:22px;font-size:20px;color:#000;letter-spacing:0.064px;">Sample: 12 bits</span>
<span class="t" style="left:1560.60px;top:1041px;line-height:22px;font-size:20px;color:#000;transform:scale(0.9780,1.000);transform-origin:0 18px;">Single: 1 /1</span>
<div class="a" style="left:1766px;top:961px;width:1px;height:106px;background:#5a4e46"></div>
<div class="a" style="left:1780.5px;top:960px;width:121px;height:49px;border-radius:7px;background:#ff1d25;border:1px solid #6a5a5a"></div>
<span class="t" style="left:1807.60px;top:973px;line-height:18px;font-size:16.5px;color:#fff;font-weight:bold;">Stopped</span>
<div class="a" style="left:1780px;top:1019.5px;width:120px;height:47.5px;border-radius:6px;background:#c8c8c8"></div>
<span class="t" style="left:1785.65px;top:1019px;line-height:22px;font-size:20px;color:#000;transform:scale(0.9782,1.000);transform-origin:0 18px;">09 Jan 2026</span>
<span class="t" style="left:1788.05px;top:1041px;line-height:22px;font-size:20px;color:#000;letter-spacing:0.256px;">9:13:45 AM</span>
<svg style="left:0;top:0" width="1920" height="1080" viewBox="0 0 1920 1080"><path d="M1546.6 863.8V885.2L1552 883.7L1555.5 889.3L1558 887.9L1556.6 881.5L1561.5 878.9Z" fill="#1c1c1c" stroke="#f4f4f4" stroke-width="1.3" stroke-linejoin="round"/></svg>
</div></body></html>
